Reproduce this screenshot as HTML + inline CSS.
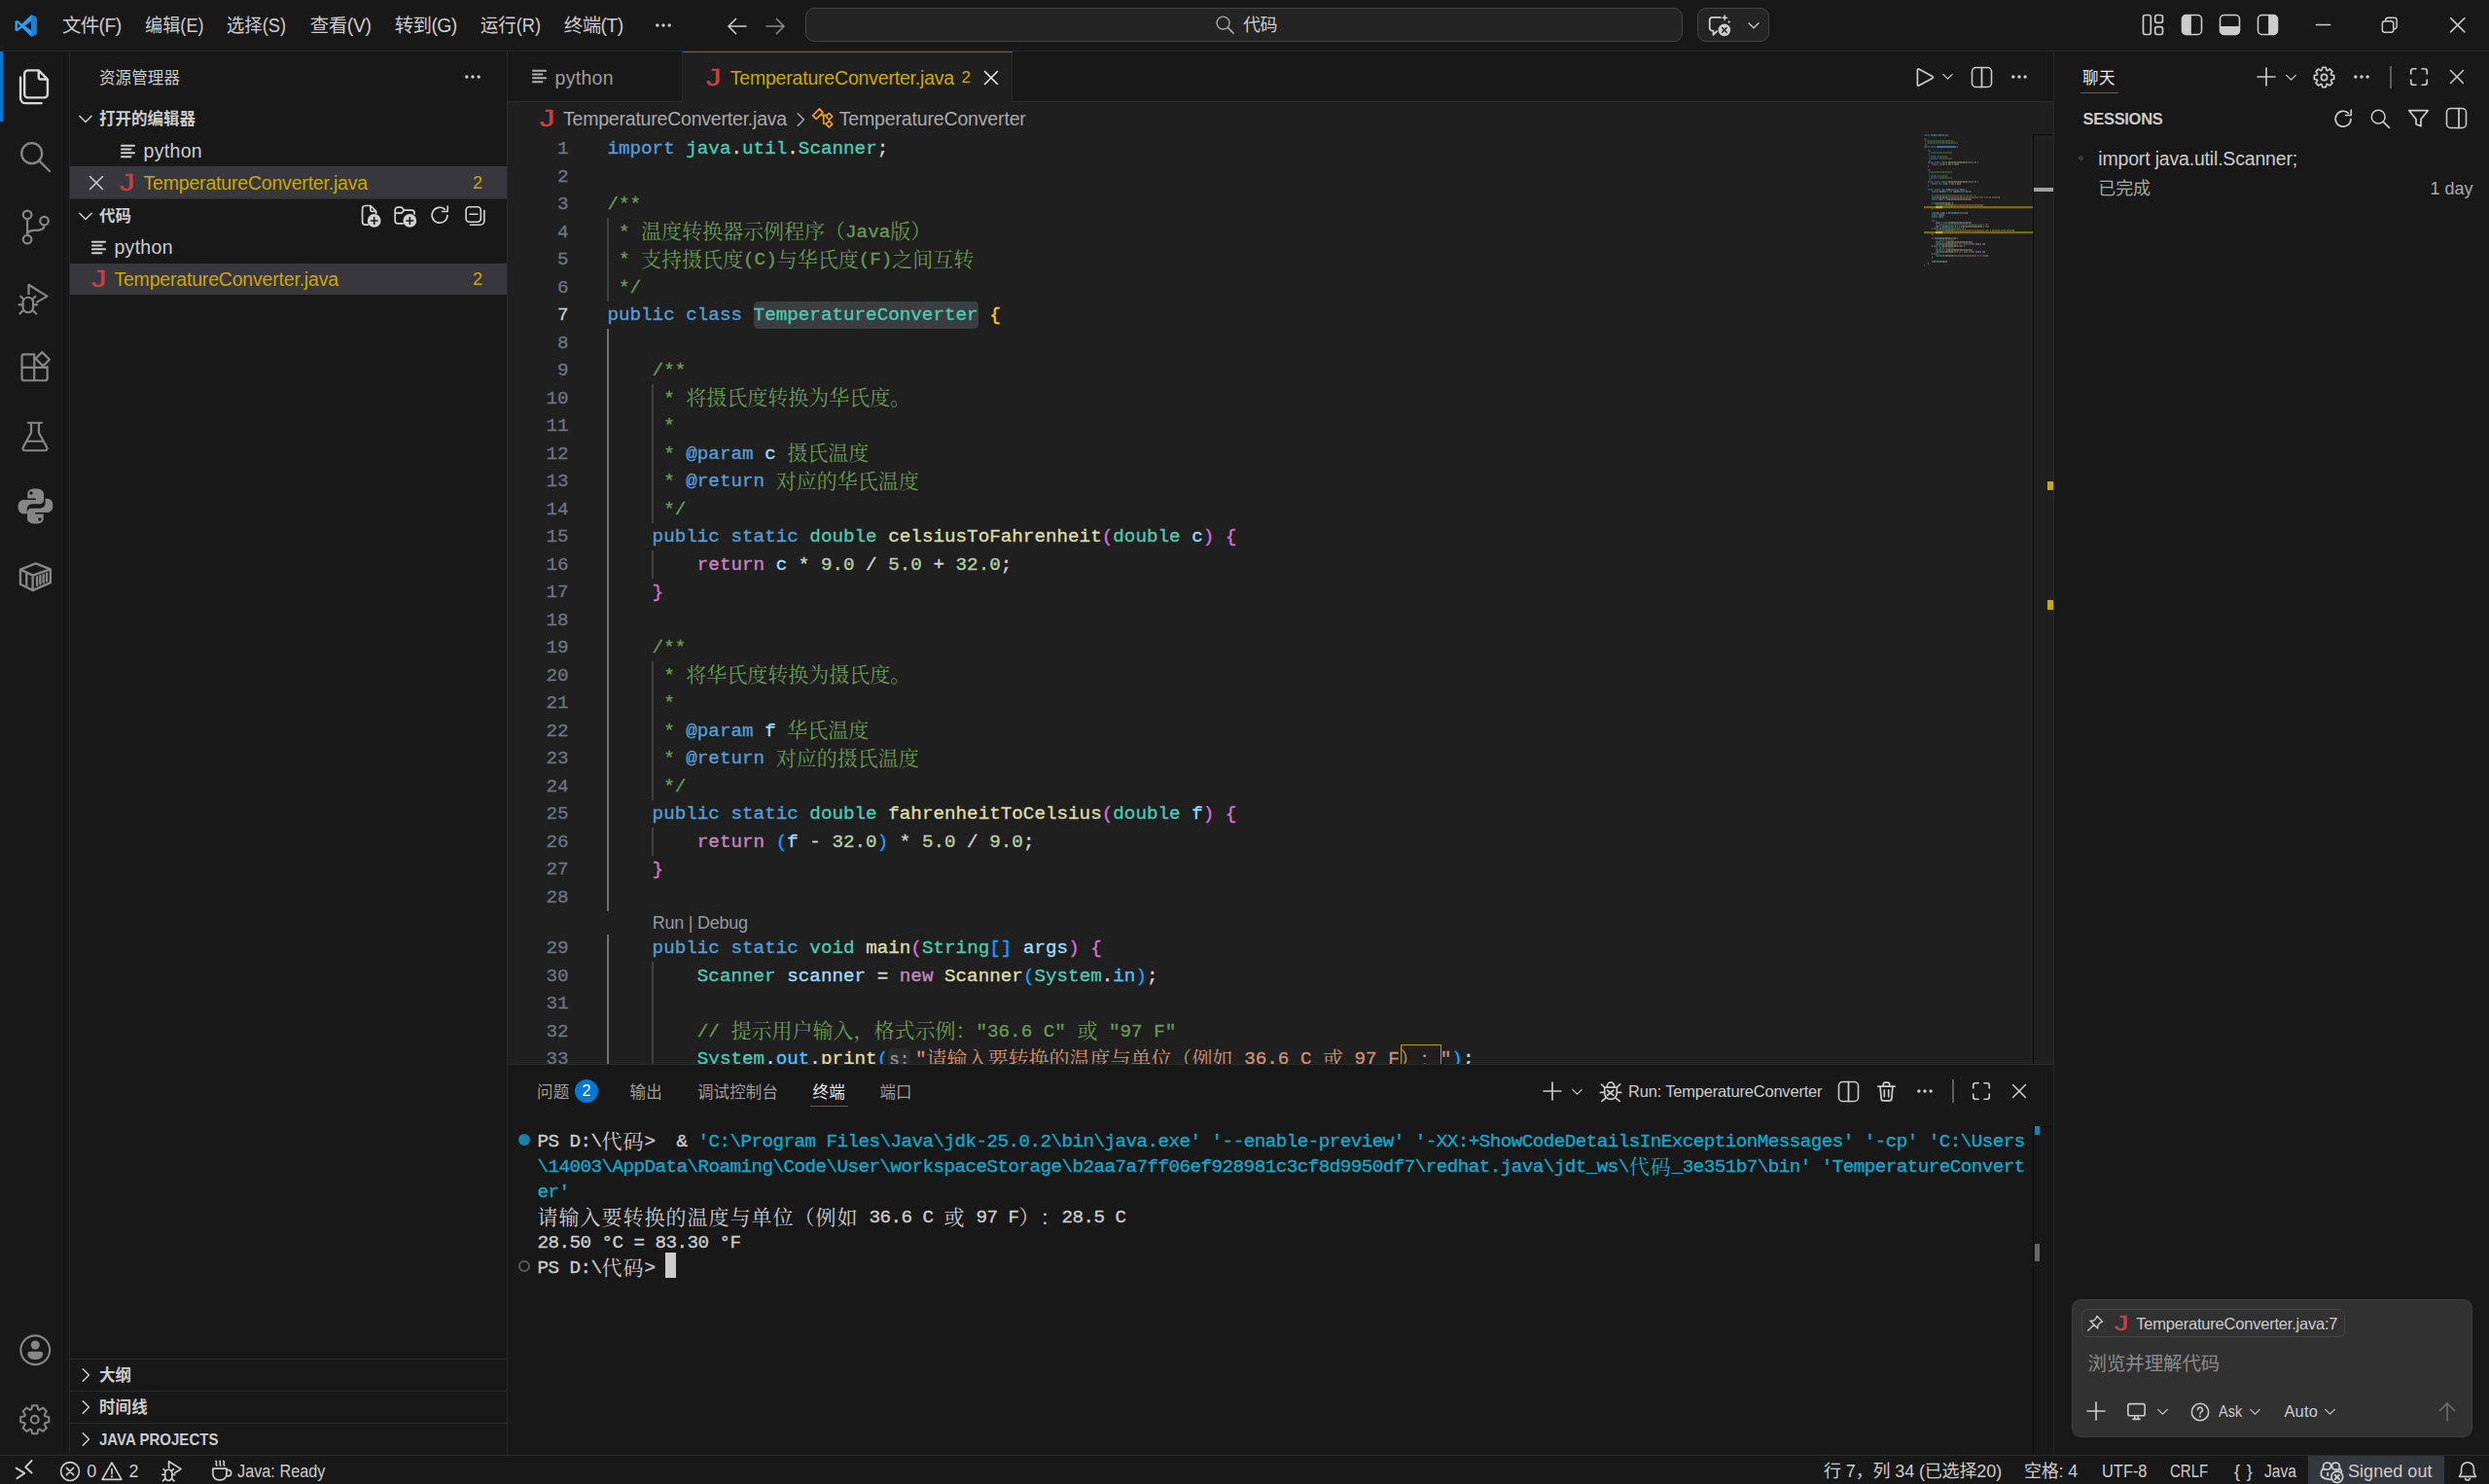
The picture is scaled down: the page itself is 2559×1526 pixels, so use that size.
<!DOCTYPE html>
<html lang="zh-CN"><head><meta charset="utf-8"><title>TemperatureConverter.java - 代码 - Visual Studio Code</title>
<style>
html,body{margin:0;padding:0;background:#181818;overflow:hidden}
body{text-spacing-trim:space-all;width:2559px;height:1526px;position:relative;font-family:"Liberation Sans","Noto Sans CJK SC",sans-serif;color:#cccccc;font-size:19.5px}
.a{position:absolute}
.t{position:absolute;white-space:pre}
.cl{position:absolute;white-space:pre;font-family:"Liberation Mono","Noto Serif CJK SC",monospace;font-size:19.25px;line-height:28.5px;height:28.5px;left:624.4px;color:#d4d4d4;-webkit-text-stroke:0.35px}
.cj{font-family:"Noto Serif CJK SC","Noto Sans CJK SC",serif;font-size:21px;line-height:1px;position:relative;top:1.5px;-webkit-text-stroke:0}
.ln{position:absolute;white-space:pre;font-family:"Liberation Mono","Noto Serif CJK SC",monospace;font-size:19.25px;line-height:28.5px;height:28.5px;width:62.5px;left:522px;text-align:right;color:#6e7681;-webkit-text-stroke:0.3px}
.tl{position:absolute;white-space:pre;font-family:"Liberation Mono","Noto Serif CJK SC",monospace;font-size:19.25px;letter-spacing:-0.55px;line-height:26px;height:26px;left:552.5px;color:#cccccc;-webkit-text-stroke:0.35px}
.tj{font-family:"Noto Serif CJK SC","Noto Sans CJK SC",serif;font-size:21px;letter-spacing:1px;line-height:1px;position:relative;top:2px;-webkit-text-stroke:0}
.k{color:#569cd6}.c{color:#c586c0}.y{color:#4ec9b0}.f{color:#dcdcaa}.v{color:#9cdcfe}.s{color:#ce9178}.n{color:#b5cea8}.g{color:#6a9955}.b1{color:#ffd700}.b2{color:#da70d6}.b3{color:#179fff}.o{color:#4fc1ff}.cy{color:#11a8cd}
</style></head>
<body>
<div class="a" style="left:0px;top:0px;width:2559px;height:1526px;background:#181818;"></div>
<div class="a" style="left:0px;top:52px;width:2559px;height:1px;background:#2b2b2b;"></div>
<div class="a" style="left:71px;top:53px;width:1px;height:1443px;background:#2b2b2b;"></div>
<div class="a" style="left:521px;top:53px;width:1px;height:1443px;background:#2b2b2b;"></div>
<div class="a" style="left:522px;top:53px;width:1589px;height:1042px;background:#1f1f1f;"></div>
<div class="a" style="left:522px;top:53px;width:1589px;height:52px;background:#181818;"></div>
<div class="a" style="left:522px;top:104px;width:1589px;height:1px;background:#2b2b2b;"></div>
<div class="a" style="left:702px;top:53px;width:339px;height:52px;background:#1f1f1f;"></div>
<div class="a" style="left:701px;top:53px;width:1px;height:52px;background:#2b2b2b;"></div>
<div class="a" style="left:1040px;top:53px;width:1px;height:52px;background:#2b2b2b;"></div>
<div class="a" style="left:702px;top:53px;width:339px;height:1px;background:#0078d4;"></div>
<div class="a" style="left:522px;top:1094px;width:1589px;height:1px;background:#2b2b2b;"></div>
<div class="a" style="left:2111px;top:53px;width:1px;height:1443px;background:#2b2b2b;"></div>
<div class="a" style="left:0px;top:1496px;width:2559px;height:1px;background:#2b2b2b;"></div>
<svg class="a" style="left:13.80px;top:13.50px;color:#cccccc" width="25" height="25" viewBox="0 0 24 24"><path d="M17.5 1.2 L8.2 10 L3.6 6.4 L1.4 7.5 V16.5 L3.6 17.6 L8.2 14 L17.5 22.8 L22.6 20.4 V3.6 Z M17.5 7.2 V16.8 L11.2 12 Z M3.8 9.3 L6.7 12 L3.8 14.7 Z" fill="#2a9df4" fill-rule="evenodd"/><path d="M17.5 1.2 L22.6 3.6 V20.4 L17.5 22.8 Z" fill="#1f7fd0"/></svg>
<span id="t1" class="t" style="top:11.00px;font-size:19.5px;color:#cccccc;line-height:30px;height:30px;left:63.90px;letter-spacing:-0.643px;">文件(F)</span>
<span id="t2" class="t" style="top:11.00px;font-size:19.5px;color:#cccccc;line-height:30px;height:30px;left:148.70px;transform:scaleX(0.9323);transform-origin:0 50%;">编辑(E)</span>
<span id="t3" class="t" style="top:11.00px;font-size:19.5px;color:#cccccc;line-height:30px;height:30px;left:233.40px;transform:scaleX(0.9415);transform-origin:0 50%;">选择(S)</span>
<span id="t4" class="t" style="top:11.00px;font-size:19.5px;color:#cccccc;line-height:30px;height:30px;left:318.70px;letter-spacing:-0.419px;">查看(V)</span>
<span id="t5" class="t" style="top:11.00px;font-size:19.5px;color:#cccccc;line-height:30px;height:30px;left:405.70px;letter-spacing:-0.653px;">转到(G)</span>
<span id="t6" class="t" style="top:11.00px;font-size:19.5px;color:#cccccc;line-height:30px;height:30px;left:493.70px;transform:scaleX(0.9394);transform-origin:0 50%;">运行(R)</span>
<span id="t7" class="t" style="top:11.00px;font-size:19.5px;color:#cccccc;line-height:30px;height:30px;left:579.80px;letter-spacing:-0.643px;">终端(T)</span>
<svg class="a" style="left:669.70px;top:14.00px;color:#cccccc" width="24" height="24" viewBox="0 0 16 16"><circle cx="3.9" cy="8" r="1.15" fill="currentColor"/><circle cx="8" cy="8" r="1.15" fill="currentColor"/><circle cx="12.1" cy="8" r="1.15" fill="currentColor"/></svg>
<svg class="a" style="left:745.50px;top:14.50px;color:#cccccc" width="24" height="24" viewBox="0 0 16 16"><path d="M14 8 H2.5 M7 3 L2 8 L7 13" fill="none" stroke="currentColor" stroke-width="1.1" stroke-linecap="round" stroke-linejoin="round" /></svg>
<svg class="a" style="left:784.80px;top:14.50px;color:#8a8a8a" width="24" height="24" viewBox="0 0 16 16"><path d="M2 8 H13.5 M9 3 L14 8 L9 13" fill="none" stroke="currentColor" stroke-width="1.1" stroke-linecap="round" stroke-linejoin="round" /></svg>
<div class="a" style="left:828px;top:8px;width:900px;height:33px;background:#242424;border:1px solid #444444;border-radius:9px"></div>
<svg class="a" style="left:1247.75px;top:13.55px;color:#a8a8a8" width="22.5" height="22.5" viewBox="0 0 16 16"><circle cx="6.8" cy="6.8" r="4.6" fill="none" stroke="currentColor" stroke-width="1"/><path d="M10.2 10.2 L14.3 14.3" fill="none" stroke="currentColor" stroke-width="1.1" stroke-linecap="round" stroke-linejoin="round" /></svg>
<span id="t8" class="t" style="top:10.50px;font-size:18px;color:#cccccc;line-height:30px;height:30px;left:1278.00px;letter-spacing:-0.500px;">代码</span>
<div class="a" style="left:1745px;top:8px;width:72px;height:33px;background:#242424;border:1px solid #444444;border-radius:9px"></div>
<svg class="a" style="left:1755.00px;top:12.50px;color:#cccccc" width="26" height="26" viewBox="0 0 16 16"><path d="M8.5 3 H3.5 A1.8 1.8 0 0 0 1.7 4.8 V9.7 A1.8 1.8 0 0 0 3.5 11.5 H4 V14 L6.3 11.7" fill="none" stroke="currentColor" stroke-width="1.1" stroke-linecap="round" stroke-linejoin="round" /><path d="M11.2 .8 L11.8 2.6 L13.6 3.2 L11.8 3.8 L11.2 5.6 L10.6 3.8 L8.8 3.2 L10.6 2.6 Z M14 4.6 L14.3 5.5 L15.2 5.8 L14.3 6.1 L14 7 L13.7 6.1 L12.8 5.8 L13.7 5.5 Z" fill="currentColor" /><circle cx="11" cy="11" r="3.9" fill="currentColor"/><path d="M9.6 9.6 L12.4 12.4 M12.4 9.6 L9.6 12.4" stroke="#181818" stroke-width=".85" stroke-linecap="round"/></svg>
<svg class="a" style="left:1793.50px;top:16.50px;color:#cccccc" width="18" height="18" viewBox="0 0 16 16"><path d="M3.5 6 L8 10.5 L12.5 6" fill="none" stroke="currentColor" stroke-width="1.1" stroke-linecap="round" stroke-linejoin="round" /></svg>
<svg class="a" style="left:2201.20px;top:13.20px;color:#cccccc" width="25" height="25" viewBox="0 0 16 16"><rect x="1.6" y="1.6" width="5" height="12.8" rx="1.4" fill="none" stroke="currentColor" stroke-width="1.1"/><rect x="9.4" y="1.6" width="5" height="5" rx="1.4" fill="none" stroke="currentColor" stroke-width="1.1"/><rect x="9.4" y="9.4" width="5" height="5" rx="1.4" fill="none" stroke="currentColor" stroke-width="1.1"/></svg>
<svg class="a" style="left:2240.50px;top:13.20px;color:#cccccc" width="25" height="25" viewBox="0 0 16 16"><rect x="1.6" y="1.6" width="12.8" height="12.8" rx="2.6" fill="none" stroke="currentColor"/><path d="M4.2 1.6 H7.6 V14.4 H4.2 A2.6 2.6 0 0 1 1.6 11.8 V4.2 A2.6 2.6 0 0 1 4.2 1.6 Z" fill="currentColor" /></svg>
<svg class="a" style="left:2279.50px;top:13.20px;color:#cccccc" width="25" height="25" viewBox="0 0 16 16"><rect x="1.6" y="1.6" width="12.8" height="12.8" rx="2.6" fill="none" stroke="currentColor"/><path d="M1.6 9 H14.4 V11.8 A2.6 2.6 0 0 1 11.8 14.4 H4.2 A2.6 2.6 0 0 1 1.6 11.8 Z" fill="currentColor" /></svg>
<svg class="a" style="left:2318.50px;top:13.20px;color:#cccccc" width="25" height="25" viewBox="0 0 16 16"><rect x="1.6" y="1.6" width="12.8" height="12.8" rx="2.6" fill="none" stroke="currentColor"/><path d="M11.8 1.6 H8.4 V14.4 H11.8 A2.6 2.6 0 0 0 14.4 11.8 V4.2 A2.6 2.6 0 0 0 11.8 1.6 Z" fill="currentColor" /></svg>
<svg class="a" style="left:2377.80px;top:15.00px;color:#cccccc" width="21" height="21" viewBox="0 0 16 16"><path d="M2.5 8 H13.5" fill="none" stroke="currentColor" stroke-width="1" stroke-linecap="round" stroke-linejoin="round" /></svg>
<svg class="a" style="left:2445.75px;top:14.75px;color:#cccccc" width="21.5" height="21.5" viewBox="0 0 16 16"><rect x="2.5" y="5" width="8.5" height="8.5" rx="1.8" fill="none" stroke="currentColor" stroke-width="1.1"/><path d="M5 5 V4.3 A1.8 1.8 0 0 1 6.8 2.5 H11.7 A1.8 1.8 0 0 1 13.5 4.3 V9.2 A1.8 1.8 0 0 1 11.7 11 H11" fill="none" stroke="currentColor" stroke-width="1.1" stroke-linecap="round" stroke-linejoin="round" /></svg>
<svg class="a" style="left:2515.55px;top:14.75px;color:#cccccc" width="21.5" height="21.5" viewBox="0 0 16 16"><path d="M2.7 2.7 L13.3 13.3 M13.3 2.7 L2.7 13.3" fill="none" stroke="currentColor" stroke-width="1.1" stroke-linecap="round" stroke-linejoin="round" /></svg>
<div class="a" style="left:0px;top:53px;width:3px;height:72px;background:#0078d4;"></div>
<svg class="a" style="left:16.00px;top:70.00px;color:#d7d7d7" width="38" height="38" viewBox="0 0 24 24"><path d="M8 1.5 H15 L20.8 7.3 V17 A2.2 2.2 0 0 1 18.6 19.2 H8 A2.2 2.2 0 0 1 5.8 17 V3.7 A2.2 2.2 0 0 1 8 1.5 Z M15 1.7 V5.8 A1.5 1.5 0 0 0 16.5 7.3 H20.6 M3.2 6 V19.5 A3.3 3.3 0 0 0 6.5 22.8 H16.8" fill="none" stroke="currentColor" stroke-width="1.5" stroke-linecap="round" stroke-linejoin="round" /></svg>
<svg class="a" style="left:16.00px;top:141.00px;color:#868686" width="40" height="40" viewBox="0 0 24 24"><circle cx="10" cy="10" r="6.3" fill="none" stroke="currentColor" stroke-width="1.4"/><path d="M14.6 14.6 L21 21" fill="none" stroke="currentColor" stroke-width="1.4" stroke-linecap="round" stroke-linejoin="round" /></svg>
<svg class="a" style="left:17.00px;top:214.00px;color:#868686" width="38" height="38" viewBox="0 0 24 24"><circle cx="7" cy="4.3" r="2.7" fill="none" stroke="currentColor" stroke-width="1.4"/><circle cx="7" cy="20.3" r="2.7" fill="none" stroke="currentColor" stroke-width="1.4"/><circle cx="18" cy="8.3" r="2.7" fill="none" stroke="currentColor" stroke-width="1.4"/><path d="M7 7 V17.6 M18 11 C18 14.5 14.5 14.3 11 14.5 C8.5 14.7 7 15.5 7 17.6" fill="none" stroke="currentColor" stroke-width="1.4" stroke-linecap="round" stroke-linejoin="round" /></svg>
<svg class="a" style="left:16.00px;top:288.00px;color:#868686" width="38" height="38" viewBox="0 0 24 24"><path d="M8.5 9 V3 L20.5 10.5 L14 14.3" fill="none" stroke="currentColor" stroke-width="1.4" stroke-linecap="round" stroke-linejoin="round" /><path d="M4.8 14.5 A3.3 3.3 0 0 1 11.4 14.5 V17.7 A3.3 3.3 0 0 1 4.8 17.7 Z M4.8 16 H2.2 M11.4 16 H14 M5.2 19.5 L2.8 21.8 M11 19.5 L13.4 21.8 M5.4 12.6 L3.3 10.6 M10.8 12.6 L12.9 10.6" fill="none" stroke="currentColor" stroke-width="1.4" stroke-linecap="round" stroke-linejoin="round" /></svg>
<svg class="a" style="left:17.00px;top:358.00px;color:#868686" width="38" height="38" viewBox="0 0 24 24"><path d="M3.5 5.5 A1.5 1.5 0 0 1 5 4 H11.5 V21 H5 A1.5 1.5 0 0 1 3.5 19.5 Z M3.5 12.5 H20 V19.5 A1.5 1.5 0 0 1 18.500 21 H11.5 M11.5 12 V12 M20 12 V12.2 M16.6 2.6 L21.4 7.4 L17.2 11.6 L12.4 6.8 Z" fill="none" stroke="currentColor" stroke-width="1.4" stroke-linecap="round" stroke-linejoin="round" /></svg>
<svg class="a" style="left:17.00px;top:430.00px;color:#868686" width="38" height="38" viewBox="0 0 24 24"><path d="M7.5 3 H16.500 M9.5 3 V9.5 L4.3 19 A1.3 1.3 0 0 0 5.4 21 H18.6 A1.3 1.3 0 0 0 19.7 19 L14.5 9.5 V3 M6.5 15 H17.5" fill="none" stroke="currentColor" stroke-width="1.4" stroke-linecap="round" stroke-linejoin="round" /></svg>
<svg class="a" style="left:15.50px;top:499.50px;color:#868686" width="41" height="41" viewBox="0 0 24 24"><path d="M11.9 1.5 C8.8 1.5 7.2 2.6 7.2 4.6 V7.3 H12.2 V8.2 H5 C3 8.2 1.5 9.6 1.5 12.3 C1.5 15 2.9 16.6 4.8 16.6 H6.9 V13.9 C6.9 12 8.4 10.700 10.300 10.700 H14.5 C16 10.700 17 9.6 17 8.2 V4.6 C17 2.700 15.200 1.500 11.900 1.500 Z M9.400 3.100 A1 1 0 1 1 9.400 5.100 A1 1 0 0 1 9.400 3.100 Z" fill="currentColor" /><path d="M12.1 22.5 C15.2 22.5 16.8 21.4 16.8 19.4 V16.7 H11.8 V15.8 H19 C21 15.8 22.5 14.4 22.5 11.7 C22.5 9 21.1 7.4 19.2 7.4 H17.9 V10.1 C17.9 12 16.4 13.3 14.5 13.3 H9.5 C8 13.3 7 14.4 7 15.8 V19.4 C7 21.3 8.8 22.5 12.1 22.5 Z M14.6 20.9 A1 1 0 1 1 14.6 18.9 A1 1 0 0 1 14.6 20.9 Z" fill="currentColor" /></svg>
<svg class="a" style="left:17.00px;top:573.00px;color:#868686" width="38" height="38" viewBox="0 0 24 24"><path d="M2.5 8 L12.5 4 L22 7.8 V16.5 L10.5 21.5 L2.5 17.5 Z M2.5 8 L10.5 11.8 L22 7.8 M10.5 11.8 V21.5 M6.5 10 V19.4 M13.3 12.8 V18.2 M15.4 12 V17.3 M17.5 11.3 V16.4 M19.6 10.6 V15.5" fill="none" stroke="currentColor" stroke-width="1.5" stroke-linecap="round" stroke-linejoin="round" /></svg>
<svg class="a" style="left:17.75px;top:1369.75px;color:#868686" width="36.5" height="36.5" viewBox="0 0 24 24"><circle cx="12" cy="12" r="9.8" fill="none" stroke="currentColor" stroke-width="1.4"/><circle cx="12" cy="8.6" r="3" fill="currentColor"/><path d="M6.8 14.6 A1.6 1.6 0 0 1 8.4 13 H15.6 A1.6 1.6 0 0 1 17.2 14.6 C17.2 17 15 18.5 12 18.5 C9 18.5 6.8 17 6.8 14.6 Z" fill="currentColor" /></svg>
<svg class="a" style="left:18.25px;top:1442.25px;color:#868686" width="35.5" height="35.5" viewBox="0 0 24 24"><path d="M9.59 5.00 L10.26 2.15 L13.74 2.15 L14.41 5.00 L15.24 5.35 L17.74 3.81 L20.19 6.26 L18.65 8.76 L19.00 9.59 L21.85 10.26 L21.85 13.74 L19.00 14.41 L18.65 15.24 L20.19 17.74 L17.74 20.19 L15.24 18.65 L14.41 19.00 L13.74 21.85 L10.26 21.85 L9.59 19.00 L8.76 18.65 L6.26 20.19 L3.81 17.74 L5.35 15.24 L5.00 14.41 L2.15 13.74 L2.15 10.26 L5.00 9.59 L5.35 8.76 L3.81 6.26 L6.26 3.81 L8.76 5.35 Z" fill="none" stroke="currentColor" stroke-width="1.4" stroke-linecap="round" stroke-linejoin="round" /><circle cx="12" cy="12" r="2.7" fill="none" stroke="currentColor" stroke-width="1.4"/></svg>
<span id="t9" class="t" style="top:65.00px;font-size:16.5px;color:#cccccc;line-height:30px;height:30px;left:102.00px;letter-spacing:0.100px;">资源管理器</span>
<svg class="a" style="left:474.00px;top:67.00px;color:#cccccc" width="24" height="24" viewBox="0 0 16 16"><circle cx="3.9" cy="8" r="1.15" fill="currentColor"/><circle cx="8" cy="8" r="1.15" fill="currentColor"/><circle cx="12.1" cy="8" r="1.15" fill="currentColor"/></svg>
<svg class="a" style="left:76.50px;top:111.00px;color:#cccccc" width="22" height="22" viewBox="0 0 16 16"><path d="M3.5 6 L8 10.5 L12.5 6" fill="none" stroke="currentColor" stroke-width="1.1" stroke-linecap="round" stroke-linejoin="round" /></svg>
<span id="t10" class="t" style="top:107.00px;font-size:16.5px;color:#cccccc;line-height:30px;height:30px;left:102.00px;font-weight:bold;letter-spacing:0.000px;">打开的编辑器</span>
<svg class="a" style="left:121.00px;top:145.00px;color:#d0d0d0" width="21" height="21" viewBox="0 0 16 16"><path d="M3 3.6 H13 M3 6.5 H10.3 M3 9.4 H13 M3 12.3 H10.3" fill="none" stroke="currentColor" stroke-width="1.5" stroke-linecap="round" stroke-linejoin="round" stroke-linecap="butt"/></svg>
<span id="t11" class="t" style="top:140.00px;font-size:19.5px;color:#cccccc;line-height:30px;height:30px;left:147.50px;letter-spacing:0.323px;">python</span>
<div class="a" style="left:72px;top:171px;width:449px;height:33.5px;background:#37373d;"></div>
<svg class="a" style="left:88.00px;top:177.00px;color:#d0d0d0" width="22" height="22" viewBox="0 0 16 16"><path d="M3.3 3.3 L12.7 12.7 M12.7 3.3 L3.3 12.7" fill="none" stroke="currentColor" stroke-width="1.1" stroke-linecap="round" stroke-linejoin="round" /></svg>
<span id="t12" class="t" style="top:172.50px;font-size:23px;color:#cc3e44;line-height:30px;height:30px;left:123.00px;-webkit-text-stroke:0.5px #cc3e44;transform:scaleX(1.32);transform-origin:0 50%;">J</span>
<span id="t13" class="t" style="top:172.50px;font-size:19.5px;color:#cca700;line-height:30px;height:30px;left:147.50px;letter-spacing:-0.188px;">TemperatureConverter.java</span>
<span id="t14" class="t" style="top:172.50px;font-size:18px;color:#cca700;line-height:30px;height:30px;right:2063.00px;">2</span>
<div class="a" style="left:72px;top:204px;width:449px;height:1px;background:#2b2b2b;"></div>
<svg class="a" style="left:76.50px;top:211.00px;color:#cccccc" width="22" height="22" viewBox="0 0 16 16"><path d="M3.5 6 L8 10.5 L12.5 6" fill="none" stroke="currentColor" stroke-width="1.1" stroke-linecap="round" stroke-linejoin="round" /></svg>
<span id="t15" class="t" style="top:207.00px;font-size:16.5px;color:#cccccc;line-height:30px;height:30px;left:102.00px;font-weight:bold;letter-spacing:0.000px;">代码</span>
<svg class="a" style="left:369.00px;top:208.50px;color:#d2d2d2" width="25" height="25" viewBox="0 0 16 16"><path d="M6 14.1 H4.3 A2 2 0 0 1 2.3 12.1 V3.6 A2 2 0 0 1 4.3 1.6 H7.6 L11.3 5.3 V6.5 M7.6 1.8 V4.3 A1 1 0 0 0 8.6 5.3 H11.1" fill="none" stroke="currentColor" stroke-width="1.1" stroke-linecap="round" stroke-linejoin="round" /><circle cx="10.05" cy="11.5" r="4.4" fill="currentColor"/><path d="M10.05 9.0 V14.0 M7.550000000000001 11.5 H12.55" stroke="#181818" stroke-width="1" fill="none"/></svg>
<svg class="a" style="left:403.50px;top:208.50px;color:#d2d2d2" width="25" height="25" viewBox="0 0 16 16"><path d="M6.5 13.3 H3.2 A1.8 1.8 0 0 1 1.4 11.5 V4.5 A1.8 1.8 0 0 1 3.2 2.700 H5.6 L7.5 4.6 H12.3 A1.8 1.8 0 0 1 14.1 6.4 V7 M1.4 6.500 H5.600 L7.500 4.600" fill="none" stroke="currentColor" stroke-width="1.1" stroke-linecap="round" stroke-linejoin="round" /><circle cx="11.1" cy="11.5" r="4.4" fill="currentColor"/><path d="M11.1 9.0 V14.0 M8.6 11.5 H13.6" stroke="#181818" stroke-width="1" fill="none"/></svg>
<svg class="a" style="left:439.50px;top:209.00px;color:#d2d2d2" width="24" height="24" viewBox="0 0 16 16"><path d="M13.35 8.3 A5.3 5.3 0 1 1 11.6 4.2" fill="none" stroke="currentColor" stroke-width="1.1" stroke-linecap="round" stroke-linejoin="round" /><path d="M13.5 2 V5.65 H9.8" fill="none" stroke="currentColor" stroke-width="1.1" stroke-linecap="round" stroke-linejoin="round" /></svg>
<svg class="a" style="left:476.00px;top:209.00px;color:#d2d2d2" width="24" height="24" viewBox="0 0 16 16"><rect x="2.1" y="2.5" width="10.1" height="10.3" rx="2.2" fill="none" stroke="currentColor" stroke-width="1.1"/><path d="M4.7 7.5 H9.9 M14.6 5 V12 A2.8 2.8 0 0 1 11.8 14.8 H5" fill="none" stroke="currentColor" stroke-width="1.1" stroke-linecap="round" stroke-linejoin="round" /></svg>
<svg class="a" style="left:90.50px;top:243.50px;color:#d0d0d0" width="21" height="21" viewBox="0 0 16 16"><path d="M3 3.6 H13 M3 6.5 H10.3 M3 9.4 H13 M3 12.3 H10.3" fill="none" stroke="currentColor" stroke-width="1.5" stroke-linecap="round" stroke-linejoin="round" stroke-linecap="butt"/></svg>
<span id="t16" class="t" style="top:238.50px;font-size:19.5px;color:#cccccc;line-height:30px;height:30px;left:117.40px;letter-spacing:0.323px;">python</span>
<div class="a" style="left:72px;top:270.5px;width:449px;height:32.5px;background:#37373d;"></div>
<span id="t17" class="t" style="top:271.50px;font-size:23px;color:#cc3e44;line-height:30px;height:30px;left:93.50px;-webkit-text-stroke:0.5px #cc3e44;transform:scaleX(1.32);transform-origin:0 50%;">J</span>
<span id="t18" class="t" style="top:271.50px;font-size:19.5px;color:#cca700;line-height:30px;height:30px;left:117.40px;letter-spacing:-0.188px;">TemperatureConverter.java</span>
<span id="t19" class="t" style="top:271.50px;font-size:18px;color:#cca700;line-height:30px;height:30px;right:2063.00px;">2</span>
<div class="a" style="left:72px;top:1397px;width:449px;height:1px;background:#2b2b2b;"></div>
<svg class="a" style="left:77.00px;top:1403.00px;color:#cccccc" width="22" height="22" viewBox="0 0 16 16"><path d="M6 3.5 L10.5 8 L6 12.5" fill="none" stroke="currentColor" stroke-width="1.1" stroke-linecap="round" stroke-linejoin="round" /></svg>
<span id="t20" class="t" style="top:1399.00px;font-size:16.5px;color:#cccccc;line-height:30px;height:30px;left:102.00px;font-weight:bold;letter-spacing:0.000px;">大纲</span>
<div class="a" style="left:72px;top:1430px;width:449px;height:1px;background:#2b2b2b;"></div>
<svg class="a" style="left:77.00px;top:1436.00px;color:#cccccc" width="22" height="22" viewBox="0 0 16 16"><path d="M6 3.5 L10.5 8 L6 12.5" fill="none" stroke="currentColor" stroke-width="1.1" stroke-linecap="round" stroke-linejoin="round" /></svg>
<span id="t21" class="t" style="top:1432.00px;font-size:16.5px;color:#cccccc;line-height:30px;height:30px;left:102.00px;font-weight:bold;letter-spacing:0.065px;">时间线</span>
<div class="a" style="left:72px;top:1463px;width:449px;height:1px;background:#2b2b2b;"></div>
<svg class="a" style="left:77.00px;top:1469.00px;color:#cccccc" width="22" height="22" viewBox="0 0 16 16"><path d="M6 3.5 L10.5 8 L6 12.5" fill="none" stroke="currentColor" stroke-width="1.1" stroke-linecap="round" stroke-linejoin="round" /></svg>
<span id="t22" class="t" style="top:1465.00px;font-size:16.5px;color:#cccccc;line-height:30px;height:30px;left:102.00px;font-weight:bold;transform:scaleX(0.9105);transform-origin:0 50%;">JAVA PROJECTS</span>
<svg class="a" style="left:544.00px;top:68.00px;color:#b0b0b0" width="21" height="21" viewBox="0 0 16 16"><path d="M3 3.6 H13 M3 6.5 H10.3 M3 9.4 H13 M3 12.3 H10.3" fill="none" stroke="currentColor" stroke-width="1.5" stroke-linecap="round" stroke-linejoin="round" stroke-linecap="butt"/></svg>
<span id="t23" class="t" style="top:64.50px;font-size:19.5px;color:#9d9d9d;line-height:30px;height:30px;left:570.50px;letter-spacing:0.292px;">python</span>
<span id="t24" class="t" style="top:64.50px;font-size:23px;color:#cc3e44;line-height:30px;height:30px;left:726.00px;-webkit-text-stroke:0.5px #cc3e44;transform:scaleX(1.32);transform-origin:0 50%;">J</span>
<span id="t25" class="t" style="top:64.50px;font-size:19.5px;color:#cca700;line-height:30px;height:30px;left:750.70px;letter-spacing:-0.196px;">TemperatureConverter.java</span>
<span id="t26" class="t" style="top:64.50px;font-size:17px;color:#cca700;line-height:30px;height:30px;left:988.60px;">2</span>
<svg class="a" style="left:1008.00px;top:68.50px;color:#ffffff" width="22" height="22" viewBox="0 0 16 16"><path d="M3.3 3.3 L12.7 12.7 M12.7 3.3 L3.3 12.7" fill="none" stroke="currentColor" stroke-width="1.1" stroke-linecap="round" stroke-linejoin="round" /></svg>
<svg class="a" style="left:1967.00px;top:66.50px;color:#cccccc" width="25" height="25" viewBox="0 0 16 16"><path d="M3.7 2.5 L12.6 7.4 A.7 .7 0 0 1 12.6 8.6 L3.7 13.5 A.6 .6 0 0 1 2.8 13 V3 A.6 .6 0 0 1 3.7 2.5 Z" fill="none" stroke="currentColor" stroke-width="1.1" stroke-linecap="round" stroke-linejoin="round" /></svg>
<svg class="a" style="left:1994.00px;top:69.50px;color:#cccccc" width="17" height="17" viewBox="0 0 16 16"><path d="M3.5 6 L8 10.5 L12.5 6" fill="none" stroke="currentColor" stroke-width="1.1" stroke-linecap="round" stroke-linejoin="round" /></svg>
<svg class="a" style="left:2024.50px;top:66.50px;color:#cccccc" width="25" height="25" viewBox="0 0 16 16"><rect x="1.6" y="1.6" width="12.8" height="12.8" rx="2.6" fill="none" stroke="currentColor"/><path d="M8 1.6 V14.4" fill="none" stroke="currentColor" stroke-width="1.1" stroke-linecap="round" stroke-linejoin="round" /></svg>
<svg class="a" style="left:2064.30px;top:67.00px;color:#cccccc" width="24" height="24" viewBox="0 0 16 16"><circle cx="3.9" cy="8" r="1.15" fill="currentColor"/><circle cx="8" cy="8" r="1.15" fill="currentColor"/><circle cx="12.1" cy="8" r="1.15" fill="currentColor"/></svg>
<span id="t27" class="t" style="top:107.00px;font-size:23px;color:#cc3e44;line-height:30px;height:30px;left:555.00px;-webkit-text-stroke:0.5px #cc3e44;transform:scaleX(1.32);transform-origin:0 50%;">J</span>
<span id="t28" class="t" style="top:107.00px;font-size:19.5px;color:#a9a9a9;line-height:30px;height:30px;left:579.00px;letter-spacing:-0.208px;">TemperatureConverter.java</span>
<svg class="a" style="left:811.50px;top:111.50px;color:#a9a9a9" width="22" height="22" viewBox="0 0 16 16"><path d="M6 3.5 L10.5 8 L6 12.5" fill="none" stroke="currentColor" stroke-width="1.1" stroke-linecap="round" stroke-linejoin="round" /></svg>
<svg class="a" style="left:834.00px;top:110.00px;color:#ee9d28" width="24" height="24" viewBox="0 0 16 16"><path d="M1.1 5.9 L5.7 1.3 L8 3.7 L3.5 8.3 Z M6.8 5.6 H10.3 M8.5 5.6 V11.5 H10.3 M12.3 4.3 L14.5 6.5 L12.3 8.7 L10.1 6.5 Z M12.3 9.5 L14.5 11.7 L12.3 13.9 L10.1 11.7 Z" fill="none" stroke="currentColor" stroke-width="1.15" stroke-linecap="round" stroke-linejoin="round" /></svg>
<span id="t29" class="t" style="top:107.00px;font-size:19.5px;color:#a9a9a9;line-height:30px;height:30px;left:862.70px;letter-spacing:-0.155px;">TemperatureConverter</span>
<div class="a" style="left:522px;top:105px;width:1568px;height:989px;overflow:hidden"><div class="a" style="left:-522px;top:-105px;width:2559px;height:1526px">
<div class="a" style="left:774.5px;top:310.0px;width:231px;height:28px;background:#3a3d41;border-radius:4.5px"></div>
<div class="a" style="left:624px;top:224.0px;width:1.5px;height:85.5px;background:#404040;"></div>
<div class="a" style="left:624px;top:338.0px;width:1.5px;height:598.5px;background:#707070;"></div>
<div class="a" style="left:624px;top:960.5px;width:1.5px;height:133.5px;background:#707070;"></div>
<div class="a" style="left:670px;top:395.0px;width:1.5px;height:142.5px;background:#404040;"></div>
<div class="a" style="left:670px;top:566.0px;width:1.5px;height:28.5px;background:#404040;"></div>
<div class="a" style="left:670px;top:680.0px;width:1.5px;height:142.5px;background:#404040;"></div>
<div class="a" style="left:670px;top:851.0px;width:1.5px;height:28.5px;background:#404040;"></div>
<div class="a" style="left:670px;top:989.0px;width:1.5px;height:105.0px;background:#404040;"></div>
<div class="ln" style="top:139.4px;color:#6e7681">1</div>
<div class="cl" style="top:139.4px"><span class="k">import</span> <span class="y">java</span>.<span class="y">util</span>.<span class="y">Scanner</span>;</div>
<div class="ln" style="top:167.9px;color:#6e7681">2</div>
<div class="ln" style="top:196.4px;color:#6e7681">3</div>
<div class="cl" style="top:196.4px"><span class="g">/**</span></div>
<div class="ln" style="top:224.9px;color:#6e7681">4</div>
<div class="cl" style="top:224.9px"><span class="g"> * <span class="cj">温度转换器示例程序（</span>Java<span class="cj">版）</span></span></div>
<div class="ln" style="top:253.4px;color:#6e7681">5</div>
<div class="cl" style="top:253.4px"><span class="g"> * <span class="cj">支持摄氏度</span>(C)<span class="cj">与华氏度</span>(F)<span class="cj">之间互转</span></span></div>
<div class="ln" style="top:281.9px;color:#6e7681">6</div>
<div class="cl" style="top:281.9px"><span class="g"> */</span></div>
<div class="ln" style="top:310.4px;color:#cccccc">7</div>
<div class="cl" style="top:310.4px"><span class="k">public</span> <span class="k">class</span> <span class="y">TemperatureConverter</span> <span class="b1">{</span></div>
<div class="ln" style="top:338.9px;color:#6e7681">8</div>
<div class="ln" style="top:367.4px;color:#6e7681">9</div>
<div class="cl" style="top:367.4px">    <span class="g">/**</span></div>
<div class="ln" style="top:395.9px;color:#6e7681">10</div>
<div class="cl" style="top:395.9px">    <span class="g"> * <span class="cj">将摄氏度转换为华氏度。</span></span></div>
<div class="ln" style="top:424.4px;color:#6e7681">11</div>
<div class="cl" style="top:424.4px">    <span class="g"> *</span></div>
<div class="ln" style="top:452.9px;color:#6e7681">12</div>
<div class="cl" style="top:452.9px">    <span class="g"> * </span><span class="k">@param</span> <span class="v">c</span><span class="g"> <span class="cj">摄氏温度</span></span></div>
<div class="ln" style="top:481.4px;color:#6e7681">13</div>
<div class="cl" style="top:481.4px">    <span class="g"> * </span><span class="k">@return</span><span class="g"> <span class="cj">对应的华氏温度</span></span></div>
<div class="ln" style="top:509.9px;color:#6e7681">14</div>
<div class="cl" style="top:509.9px">    <span class="g"> */</span></div>
<div class="ln" style="top:538.4px;color:#6e7681">15</div>
<div class="cl" style="top:538.4px">    <span class="k">public</span> <span class="k">static</span> <span class="y">double</span> <span class="f">celsiusToFahrenheit</span><span class="b2">(</span><span class="y">double</span> <span class="v">c</span><span class="b2">)</span> <span class="b2">{</span></div>
<div class="ln" style="top:566.9px;color:#6e7681">16</div>
<div class="cl" style="top:566.9px">        <span class="c">return</span> <span class="v">c</span> * <span class="n">9.0</span> / <span class="n">5.0</span> + <span class="n">32.0</span>;</div>
<div class="ln" style="top:595.4px;color:#6e7681">17</div>
<div class="cl" style="top:595.4px">    <span class="b2">}</span></div>
<div class="ln" style="top:623.9px;color:#6e7681">18</div>
<div class="ln" style="top:652.4px;color:#6e7681">19</div>
<div class="cl" style="top:652.4px">    <span class="g">/**</span></div>
<div class="ln" style="top:680.9px;color:#6e7681">20</div>
<div class="cl" style="top:680.9px">    <span class="g"> * <span class="cj">将华氏度转换为摄氏度。</span></span></div>
<div class="ln" style="top:709.4px;color:#6e7681">21</div>
<div class="cl" style="top:709.4px">    <span class="g"> *</span></div>
<div class="ln" style="top:737.9px;color:#6e7681">22</div>
<div class="cl" style="top:737.9px">    <span class="g"> * </span><span class="k">@param</span> <span class="v">f</span><span class="g"> <span class="cj">华氏温度</span></span></div>
<div class="ln" style="top:766.4px;color:#6e7681">23</div>
<div class="cl" style="top:766.4px">    <span class="g"> * </span><span class="k">@return</span><span class="g"> <span class="cj">对应的摄氏温度</span></span></div>
<div class="ln" style="top:794.9px;color:#6e7681">24</div>
<div class="cl" style="top:794.9px">    <span class="g"> */</span></div>
<div class="ln" style="top:823.4px;color:#6e7681">25</div>
<div class="cl" style="top:823.4px">    <span class="k">public</span> <span class="k">static</span> <span class="y">double</span> <span class="f">fahrenheitToCelsius</span><span class="b2">(</span><span class="y">double</span> <span class="v">f</span><span class="b2">)</span> <span class="b2">{</span></div>
<div class="ln" style="top:851.9px;color:#6e7681">26</div>
<div class="cl" style="top:851.9px">        <span class="c">return</span> <span class="b3">(</span><span class="v">f</span> - <span class="n">32.0</span><span class="b3">)</span> * <span class="n">5.0</span> / <span class="n">9.0</span>;</div>
<div class="ln" style="top:880.4px;color:#6e7681">27</div>
<div class="cl" style="top:880.4px">    <span class="b2">}</span></div>
<div class="ln" style="top:908.9px;color:#6e7681">28</div>
<div class="ln" style="top:961.4px;color:#6e7681">29</div>
<div class="cl" style="top:961.4px">    <span class="k">public</span> <span class="k">static</span> <span class="y">void</span> <span class="f">main</span><span class="b2">(</span><span class="y">String</span><span class="b3">[]</span> <span class="v">args</span><span class="b2">)</span> <span class="b2">{</span></div>
<div class="ln" style="top:989.9px;color:#6e7681">30</div>
<div class="cl" style="top:989.9px">        <span class="y">Scanner</span> <span class="v">scanner</span> = <span class="c">new</span> <span class="f">Scanner</span><span class="b3">(</span><span class="y">System</span>.<span class="o">in</span><span class="b3">)</span>;</div>
<div class="ln" style="top:1018.4px;color:#6e7681">31</div>
<div class="ln" style="top:1046.9px;color:#6e7681">32</div>
<div class="cl" style="top:1046.9px">        <span class="g">// <span class="cj">提示用户输入，格式示例：</span>"36.6 C" <span class="cj">或</span> "97 F"</span></div>
<div class="ln" style="top:1075.4px;color:#6e7681">33</div>
<div class="cl" style="top:1075.4px">        <span class="y">System</span>.<span class="o">out</span>.<span class="f">print</span><span class="b3">(</span><span style="display:inline-block;width:27.8px;height:24px;vertical-align:top;margin-top:2.5px;position:relative"><span style="position:absolute;left:0;top:0;width:23px;height:24px;background:#2a2a2a;border-radius:4px;font-size:17.5px;line-height:24px;color:#969696;text-align:center">s:</span></span><span class="s">"<span class="cj">请输入要转换的温度与单位（例如</span> 36.6 C <span class="cj">或</span> 97 F</span><span class="s"><span class="cj">）：</span></span><span class="s">"</span><span class="b3">)</span>;</div>
<div class="a" style="left:1439.5px;top:1074px;width:40px;height:26px;border:1.5px solid #bd9b03"></div>
<span id="t30" class="t" style="top:934.20px;font-size:18px;color:#999999;line-height:30px;height:30px;left:670.80px;letter-spacing:-0.250px;">Run | Debug</span>
</div></div>
<svg class="a" style="left:1978px;top:137.6px" width="112" height="140" viewBox="0 0 112 140"><rect x="0" y="0.3" width="6" height="1.4" fill="#569cd6" opacity=".5"/><rect x="7" y="0.3" width="4" height="1.4" fill="#4ec9b0" opacity=".5"/><rect x="11" y="0.3" width="1" height="1.4" fill="#d4d4d4" opacity=".5"/><rect x="12" y="0.3" width="4" height="1.4" fill="#4ec9b0" opacity=".5"/><rect x="16" y="0.3" width="1" height="1.4" fill="#d4d4d4" opacity=".5"/><rect x="17" y="0.3" width="7" height="1.4" fill="#4ec9b0" opacity=".5"/><rect x="24" y="0.3" width="1" height="1.4" fill="#d4d4d4" opacity=".5"/><rect x="0" y="4.3" width="3" height="1.4" fill="#6a9955" opacity=".5"/><rect x="1" y="6.3" width="1" height="1.4" fill="#6a9955" opacity=".5"/><rect x="3" y="6.3" width="28" height="1.4" fill="#6a9955" opacity=".5"/><rect x="1" y="8.3" width="1" height="1.4" fill="#6a9955" opacity=".5"/><rect x="3" y="8.3" width="32" height="1.4" fill="#6a9955" opacity=".5"/><rect x="1" y="10.3" width="2" height="1.4" fill="#6a9955" opacity=".5"/><rect x="0" y="12.3" width="6" height="1.4" fill="#569cd6" opacity=".5"/><rect x="7" y="12.3" width="5" height="1.4" fill="#569cd6" opacity=".5"/><rect x="13" y="12.3" width="20" height="1.4" fill="#4ec9b0" opacity=".5"/><rect x="34" y="12.3" width="1" height="1.4" fill="#ffd700" opacity=".5"/><rect x="4" y="16.3" width="3" height="1.4" fill="#6a9955" opacity=".5"/><rect x="5" y="18.3" width="1" height="1.4" fill="#6a9955" opacity=".5"/><rect x="7" y="18.3" width="22" height="1.4" fill="#6a9955" opacity=".5"/><rect x="5" y="20.3" width="1" height="1.4" fill="#6a9955" opacity=".5"/><rect x="5" y="22.3" width="1" height="1.4" fill="#6a9955" opacity=".5"/><rect x="7" y="22.3" width="6" height="1.4" fill="#569cd6" opacity=".5"/><rect x="14" y="22.3" width="1" height="1.4" fill="#9cdcfe" opacity=".5"/><rect x="16" y="22.3" width="8" height="1.4" fill="#6a9955" opacity=".5"/><rect x="5" y="24.3" width="1" height="1.4" fill="#6a9955" opacity=".5"/><rect x="7" y="24.3" width="7" height="1.4" fill="#569cd6" opacity=".5"/><rect x="15" y="24.3" width="14" height="1.4" fill="#6a9955" opacity=".5"/><rect x="5" y="26.3" width="2" height="1.4" fill="#6a9955" opacity=".5"/><rect x="4" y="28.3" width="6" height="1.4" fill="#569cd6" opacity=".5"/><rect x="11" y="28.3" width="6" height="1.4" fill="#569cd6" opacity=".5"/><rect x="18" y="28.3" width="6" height="1.4" fill="#4ec9b0" opacity=".5"/><rect x="25" y="28.3" width="19" height="1.4" fill="#dcdcaa" opacity=".5"/><rect x="44" y="28.3" width="1" height="1.4" fill="#da70d6" opacity=".5"/><rect x="45" y="28.3" width="6" height="1.4" fill="#4ec9b0" opacity=".5"/><rect x="52" y="28.3" width="1" height="1.4" fill="#9cdcfe" opacity=".5"/><rect x="53" y="28.3" width="1" height="1.4" fill="#da70d6" opacity=".5"/><rect x="55" y="28.3" width="1" height="1.4" fill="#da70d6" opacity=".5"/><rect x="8" y="30.3" width="6" height="1.4" fill="#c586c0" opacity=".5"/><rect x="15" y="30.3" width="1" height="1.4" fill="#9cdcfe" opacity=".5"/><rect x="17" y="30.3" width="1" height="1.4" fill="#d4d4d4" opacity=".5"/><rect x="19" y="30.3" width="3" height="1.4" fill="#b5cea8" opacity=".5"/><rect x="23" y="30.3" width="1" height="1.4" fill="#d4d4d4" opacity=".5"/><rect x="25" y="30.3" width="3" height="1.4" fill="#b5cea8" opacity=".5"/><rect x="29" y="30.3" width="1" height="1.4" fill="#d4d4d4" opacity=".5"/><rect x="31" y="30.3" width="4" height="1.4" fill="#b5cea8" opacity=".5"/><rect x="35" y="30.3" width="1" height="1.4" fill="#d4d4d4" opacity=".5"/><rect x="4" y="32.3" width="1" height="1.4" fill="#da70d6" opacity=".5"/><rect x="4" y="36.3" width="3" height="1.4" fill="#6a9955" opacity=".5"/><rect x="5" y="38.3" width="1" height="1.4" fill="#6a9955" opacity=".5"/><rect x="7" y="38.3" width="22" height="1.4" fill="#6a9955" opacity=".5"/><rect x="5" y="40.3" width="1" height="1.4" fill="#6a9955" opacity=".5"/><rect x="5" y="42.3" width="1" height="1.4" fill="#6a9955" opacity=".5"/><rect x="7" y="42.3" width="6" height="1.4" fill="#569cd6" opacity=".5"/><rect x="14" y="42.3" width="1" height="1.4" fill="#9cdcfe" opacity=".5"/><rect x="16" y="42.3" width="8" height="1.4" fill="#6a9955" opacity=".5"/><rect x="5" y="44.3" width="1" height="1.4" fill="#6a9955" opacity=".5"/><rect x="7" y="44.3" width="7" height="1.4" fill="#569cd6" opacity=".5"/><rect x="15" y="44.3" width="14" height="1.4" fill="#6a9955" opacity=".5"/><rect x="5" y="46.3" width="2" height="1.4" fill="#6a9955" opacity=".5"/><rect x="4" y="48.3" width="6" height="1.4" fill="#569cd6" opacity=".5"/><rect x="11" y="48.3" width="6" height="1.4" fill="#569cd6" opacity=".5"/><rect x="18" y="48.3" width="6" height="1.4" fill="#4ec9b0" opacity=".5"/><rect x="25" y="48.3" width="19" height="1.4" fill="#dcdcaa" opacity=".5"/><rect x="44" y="48.3" width="1" height="1.4" fill="#da70d6" opacity=".5"/><rect x="45" y="48.3" width="6" height="1.4" fill="#4ec9b0" opacity=".5"/><rect x="52" y="48.3" width="1" height="1.4" fill="#9cdcfe" opacity=".5"/><rect x="53" y="48.3" width="1" height="1.4" fill="#da70d6" opacity=".5"/><rect x="55" y="48.3" width="1" height="1.4" fill="#da70d6" opacity=".5"/><rect x="8" y="50.3" width="6" height="1.4" fill="#c586c0" opacity=".5"/><rect x="15" y="50.3" width="1" height="1.4" fill="#179fff" opacity=".5"/><rect x="16" y="50.3" width="1" height="1.4" fill="#9cdcfe" opacity=".5"/><rect x="18" y="50.3" width="1" height="1.4" fill="#d4d4d4" opacity=".5"/><rect x="20" y="50.3" width="4" height="1.4" fill="#b5cea8" opacity=".5"/><rect x="24" y="50.3" width="1" height="1.4" fill="#179fff" opacity=".5"/><rect x="26" y="50.3" width="1" height="1.4" fill="#d4d4d4" opacity=".5"/><rect x="28" y="50.3" width="3" height="1.4" fill="#b5cea8" opacity=".5"/><rect x="32" y="50.3" width="1" height="1.4" fill="#d4d4d4" opacity=".5"/><rect x="34" y="50.3" width="3" height="1.4" fill="#b5cea8" opacity=".5"/><rect x="37" y="50.3" width="1" height="1.4" fill="#d4d4d4" opacity=".5"/><rect x="4" y="52.3" width="1" height="1.4" fill="#da70d6" opacity=".5"/><rect x="4" y="56.3" width="6" height="1.4" fill="#569cd6" opacity=".5"/><rect x="11" y="56.3" width="6" height="1.4" fill="#569cd6" opacity=".5"/><rect x="18" y="56.3" width="4" height="1.4" fill="#4ec9b0" opacity=".5"/><rect x="23" y="56.3" width="4" height="1.4" fill="#dcdcaa" opacity=".5"/><rect x="27" y="56.3" width="1" height="1.4" fill="#da70d6" opacity=".5"/><rect x="28" y="56.3" width="6" height="1.4" fill="#4ec9b0" opacity=".5"/><rect x="34" y="56.3" width="2" height="1.4" fill="#179fff" opacity=".5"/><rect x="37" y="56.3" width="4" height="1.4" fill="#9cdcfe" opacity=".5"/><rect x="41" y="56.3" width="1" height="1.4" fill="#da70d6" opacity=".5"/><rect x="43" y="56.3" width="1" height="1.4" fill="#da70d6" opacity=".5"/><rect x="8" y="58.3" width="7" height="1.4" fill="#4ec9b0" opacity=".5"/><rect x="16" y="58.3" width="7" height="1.4" fill="#9cdcfe" opacity=".5"/><rect x="24" y="58.3" width="1" height="1.4" fill="#d4d4d4" opacity=".5"/><rect x="26" y="58.3" width="3" height="1.4" fill="#c586c0" opacity=".5"/><rect x="30" y="58.3" width="7" height="1.4" fill="#dcdcaa" opacity=".5"/><rect x="37" y="58.3" width="1" height="1.4" fill="#179fff" opacity=".5"/><rect x="38" y="58.3" width="6" height="1.4" fill="#4ec9b0" opacity=".5"/><rect x="44" y="58.3" width="1" height="1.4" fill="#d4d4d4" opacity=".5"/><rect x="45" y="58.3" width="2" height="1.4" fill="#4fc1ff" opacity=".5"/><rect x="47" y="58.3" width="1" height="1.4" fill="#179fff" opacity=".5"/><rect x="48" y="58.3" width="1" height="1.4" fill="#d4d4d4" opacity=".5"/><rect x="8" y="62.3" width="2" height="1.4" fill="#6a9955" opacity=".5"/><rect x="11" y="62.3" width="29" height="1.4" fill="#6a9955" opacity=".5"/><rect x="41" y="62.3" width="2" height="1.4" fill="#6a9955" opacity=".5"/><rect x="44" y="62.3" width="2" height="1.4" fill="#6a9955" opacity=".5"/><rect x="47" y="62.3" width="3" height="1.4" fill="#6a9955" opacity=".5"/><rect x="51" y="62.3" width="2" height="1.4" fill="#6a9955" opacity=".5"/><rect x="8" y="64.3" width="6" height="1.4" fill="#4ec9b0" opacity=".5"/><rect x="14" y="64.3" width="1" height="1.4" fill="#d4d4d4" opacity=".5"/><rect x="15" y="64.3" width="3" height="1.4" fill="#4fc1ff" opacity=".5"/><rect x="18" y="64.3" width="1" height="1.4" fill="#d4d4d4" opacity=".5"/><rect x="19" y="64.3" width="5" height="1.4" fill="#dcdcaa" opacity=".5"/><rect x="24" y="64.3" width="1" height="1.4" fill="#179fff" opacity=".5"/><rect x="25" y="64.3" width="31" height="1.4" fill="#ce9178" opacity=".5"/><rect x="57" y="64.3" width="4" height="1.4" fill="#ce9178" opacity=".5"/><rect x="62" y="64.3" width="1" height="1.4" fill="#ce9178" opacity=".5"/><rect x="64" y="64.3" width="2" height="1.4" fill="#ce9178" opacity=".5"/><rect x="67" y="64.3" width="2" height="1.4" fill="#ce9178" opacity=".5"/><rect x="70" y="64.3" width="1" height="1.4" fill="#ce9178" opacity=".5"/><rect x="71" y="64.3" width="4" height="1.4" fill="#ce9178" opacity=".5"/><rect x="75" y="64.3" width="1" height="1.4" fill="#ce9178" opacity=".5"/><rect x="76" y="64.3" width="1" height="1.4" fill="#179fff" opacity=".5"/><rect x="77" y="64.3" width="1" height="1.4" fill="#d4d4d4" opacity=".5"/><rect x="8" y="66.3" width="6" height="1.4" fill="#4ec9b0" opacity=".5"/><rect x="15" y="66.3" width="5" height="1.4" fill="#9cdcfe" opacity=".5"/><rect x="21" y="66.3" width="1" height="1.4" fill="#d4d4d4" opacity=".5"/><rect x="23" y="66.3" width="7" height="1.4" fill="#9cdcfe" opacity=".5"/><rect x="30" y="66.3" width="1" height="1.4" fill="#d4d4d4" opacity=".5"/><rect x="31" y="66.3" width="8" height="1.4" fill="#dcdcaa" opacity=".5"/><rect x="39" y="66.3" width="3" height="1.4" fill="#d4d4d4" opacity=".5"/><rect x="42" y="66.3" width="4" height="1.4" fill="#dcdcaa" opacity=".5"/><rect x="46" y="66.3" width="3" height="1.4" fill="#d4d4d4" opacity=".5"/><rect x="8" y="70.3" width="2" height="1.4" fill="#c586c0" opacity=".5"/><rect x="11" y="70.3" width="1" height="1.4" fill="#d4d4d4" opacity=".5"/><rect x="12" y="70.3" width="5" height="1.4" fill="#9cdcfe" opacity=".5"/><rect x="17" y="70.3" width="1" height="1.4" fill="#d4d4d4" opacity=".5"/><rect x="18" y="70.3" width="7" height="1.4" fill="#dcdcaa" opacity=".5"/><rect x="25" y="70.3" width="3" height="1.4" fill="#d4d4d4" opacity=".5"/><rect x="29" y="70.3" width="1" height="1.4" fill="#d4d4d4" opacity=".5"/><rect x="12" y="72.3" width="6" height="1.4" fill="#4ec9b0" opacity=".5"/><rect x="18" y="72.3" width="1" height="1.4" fill="#d4d4d4" opacity=".5"/><rect x="19" y="72.3" width="3" height="1.4" fill="#4fc1ff" opacity=".5"/><rect x="22" y="72.3" width="1" height="1.4" fill="#d4d4d4" opacity=".5"/><rect x="23" y="72.3" width="7" height="1.4" fill="#dcdcaa" opacity=".5"/><rect x="30" y="72.3" width="1" height="1.4" fill="#d4d4d4" opacity=".5"/><rect x="31" y="72.3" width="28" height="1.4" fill="#ce9178" opacity=".5"/><rect x="59" y="72.3" width="2" height="1.4" fill="#d4d4d4" opacity=".5"/><rect x="12" y="74.3" width="6" height="1.4" fill="#c586c0" opacity=".5"/><rect x="18" y="74.3" width="1" height="1.4" fill="#d4d4d4" opacity=".5"/><rect x="8" y="76.3" width="1" height="1.4" fill="#d4d4d4" opacity=".5"/><rect x="8" y="80.3" width="6" height="1.4" fill="#4ec9b0" opacity=".5"/><rect x="14" y="80.3" width="2" height="1.4" fill="#d4d4d4" opacity=".5"/><rect x="17" y="80.3" width="5" height="1.4" fill="#9cdcfe" opacity=".5"/><rect x="23" y="80.3" width="1" height="1.4" fill="#d4d4d4" opacity=".5"/><rect x="25" y="80.3" width="5" height="1.4" fill="#9cdcfe" opacity=".5"/><rect x="30" y="80.3" width="1" height="1.4" fill="#d4d4d4" opacity=".5"/><rect x="31" y="80.3" width="5" height="1.4" fill="#dcdcaa" opacity=".5"/><rect x="36" y="80.3" width="1" height="1.4" fill="#d4d4d4" opacity=".5"/><rect x="37" y="80.3" width="6" height="1.4" fill="#ce9178" opacity=".5"/><rect x="43" y="80.3" width="2" height="1.4" fill="#d4d4d4" opacity=".5"/><rect x="8" y="82.3" width="6" height="1.4" fill="#4ec9b0" opacity=".5"/><rect x="15" y="82.3" width="5" height="1.4" fill="#9cdcfe" opacity=".5"/><rect x="20" y="82.3" width="1" height="1.4" fill="#d4d4d4" opacity=".5"/><rect x="8" y="84.3" width="6" height="1.4" fill="#4ec9b0" opacity=".5"/><rect x="15" y="84.3" width="4" height="1.4" fill="#9cdcfe" opacity=".5"/><rect x="19" y="84.3" width="1" height="1.4" fill="#d4d4d4" opacity=".5"/><rect x="8" y="88.3" width="3" height="1.4" fill="#c586c0" opacity=".5"/><rect x="12" y="88.3" width="1" height="1.4" fill="#d4d4d4" opacity=".5"/><rect x="12" y="90.3" width="5" height="1.4" fill="#9cdcfe" opacity=".5"/><rect x="18" y="90.3" width="1" height="1.4" fill="#d4d4d4" opacity=".5"/><rect x="20" y="90.3" width="6" height="1.4" fill="#4ec9b0" opacity=".5"/><rect x="26" y="90.3" width="1" height="1.4" fill="#d4d4d4" opacity=".5"/><rect x="27" y="90.3" width="11" height="1.4" fill="#dcdcaa" opacity=".5"/><rect x="38" y="90.3" width="1" height="1.4" fill="#d4d4d4" opacity=".5"/><rect x="39" y="90.3" width="5" height="1.4" fill="#9cdcfe" opacity=".5"/><rect x="44" y="90.3" width="1" height="1.4" fill="#d4d4d4" opacity=".5"/><rect x="45" y="90.3" width="1" height="1.4" fill="#b5cea8" opacity=".5"/><rect x="46" y="90.3" width="3" height="1.4" fill="#d4d4d4" opacity=".5"/><rect x="12" y="92.3" width="2" height="1.4" fill="#6a9955" opacity=".5"/><rect x="15" y="92.3" width="40" height="1.4" fill="#6a9955" opacity=".5"/><rect x="56" y="92.3" width="4" height="1.4" fill="#6a9955" opacity=".5"/><rect x="61" y="92.3" width="1" height="1.4" fill="#6a9955" opacity=".5"/><rect x="63" y="92.3" width="3" height="1.4" fill="#6a9955" opacity=".5"/><rect x="12" y="94.3" width="4" height="1.4" fill="#9cdcfe" opacity=".5"/><rect x="17" y="94.3" width="1" height="1.4" fill="#d4d4d4" opacity=".5"/><rect x="19" y="94.3" width="5" height="1.4" fill="#9cdcfe" opacity=".5"/><rect x="24" y="94.3" width="1" height="1.4" fill="#d4d4d4" opacity=".5"/><rect x="25" y="94.3" width="6" height="1.4" fill="#4fc1ff" opacity=".5"/><rect x="32" y="94.3" width="1" height="1.4" fill="#d4d4d4" opacity=".5"/><rect x="34" y="94.3" width="1" height="1.4" fill="#b5cea8" opacity=".5"/><rect x="36" y="94.3" width="1" height="1.4" fill="#d4d4d4" opacity=".5"/><rect x="38" y="94.3" width="5" height="1.4" fill="#9cdcfe" opacity=".5"/><rect x="43" y="94.3" width="1" height="1.4" fill="#d4d4d4" opacity=".5"/><rect x="44" y="94.3" width="1" height="1.4" fill="#b5cea8" opacity=".5"/><rect x="45" y="94.3" width="2" height="1.4" fill="#d4d4d4" opacity=".5"/><rect x="47" y="94.3" width="11" height="1.4" fill="#dcdcaa" opacity=".5"/><rect x="58" y="94.3" width="2" height="1.4" fill="#d4d4d4" opacity=".5"/><rect x="61" y="94.3" width="1" height="1.4" fill="#d4d4d4" opacity=".5"/><rect x="63" y="94.3" width="3" height="1.4" fill="#ce9178" opacity=".5"/><rect x="66" y="94.3" width="1" height="1.4" fill="#d4d4d4" opacity=".5"/><rect x="8" y="96.3" width="1" height="1.4" fill="#d4d4d4" opacity=".5"/><rect x="10" y="96.3" width="5" height="1.4" fill="#c586c0" opacity=".5"/><rect x="16" y="96.3" width="1" height="1.4" fill="#d4d4d4" opacity=".5"/><rect x="17" y="96.3" width="21" height="1.4" fill="#4ec9b0" opacity=".5"/><rect x="39" y="96.3" width="1" height="1.4" fill="#9cdcfe" opacity=".5"/><rect x="40" y="96.3" width="1" height="1.4" fill="#d4d4d4" opacity=".5"/><rect x="42" y="96.3" width="1" height="1.4" fill="#d4d4d4" opacity=".5"/><rect x="12" y="98.3" width="6" height="1.4" fill="#4ec9b0" opacity=".5"/><rect x="18" y="98.3" width="1" height="1.4" fill="#d4d4d4" opacity=".5"/><rect x="19" y="98.3" width="3" height="1.4" fill="#4fc1ff" opacity=".5"/><rect x="22" y="98.3" width="1" height="1.4" fill="#d4d4d4" opacity=".5"/><rect x="23" y="98.3" width="7" height="1.4" fill="#dcdcaa" opacity=".5"/><rect x="30" y="98.3" width="1" height="1.4" fill="#d4d4d4" opacity=".5"/><rect x="31" y="98.3" width="31" height="1.4" fill="#ce9178" opacity=".5"/><rect x="63" y="98.3" width="4" height="1.4" fill="#ce9178" opacity=".5"/><rect x="68" y="98.3" width="1" height="1.4" fill="#ce9178" opacity=".5"/><rect x="70" y="98.3" width="8" height="1.4" fill="#ce9178" opacity=".5"/><rect x="79" y="98.3" width="5" height="1.4" fill="#ce9178" opacity=".5"/><rect x="85" y="98.3" width="6" height="1.4" fill="#ce9178" opacity=".5"/><rect x="91" y="98.3" width="2" height="1.4" fill="#d4d4d4" opacity=".5"/><rect x="12" y="100.3" width="6" height="1.4" fill="#c586c0" opacity=".5"/><rect x="18" y="100.3" width="1" height="1.4" fill="#d4d4d4" opacity=".5"/><rect x="8" y="102.3" width="1" height="1.4" fill="#d4d4d4" opacity=".5"/><rect x="8" y="106.3" width="2" height="1.4" fill="#c586c0" opacity=".5"/><rect x="11" y="106.3" width="1" height="1.4" fill="#d4d4d4" opacity=".5"/><rect x="12" y="106.3" width="4" height="1.4" fill="#9cdcfe" opacity=".5"/><rect x="16" y="106.3" width="1" height="1.4" fill="#d4d4d4" opacity=".5"/><rect x="17" y="106.3" width="10" height="1.4" fill="#dcdcaa" opacity=".5"/><rect x="27" y="106.3" width="1" height="1.4" fill="#d4d4d4" opacity=".5"/><rect x="28" y="106.3" width="3" height="1.4" fill="#ce9178" opacity=".5"/><rect x="31" y="106.3" width="2" height="1.4" fill="#d4d4d4" opacity=".5"/><rect x="34" y="106.3" width="1" height="1.4" fill="#d4d4d4" opacity=".5"/><rect x="12" y="108.3" width="2" height="1.4" fill="#6a9955" opacity=".5"/><rect x="15" y="108.3" width="6" height="1.4" fill="#6a9955" opacity=".5"/><rect x="22" y="108.3" width="2" height="1.4" fill="#6a9955" opacity=".5"/><rect x="25" y="108.3" width="6" height="1.4" fill="#6a9955" opacity=".5"/><rect x="12" y="110.3" width="6" height="1.4" fill="#4ec9b0" opacity=".5"/><rect x="19" y="110.3" width="1" height="1.4" fill="#9cdcfe" opacity=".5"/><rect x="21" y="110.3" width="1" height="1.4" fill="#d4d4d4" opacity=".5"/><rect x="23" y="110.3" width="19" height="1.4" fill="#dcdcaa" opacity=".5"/><rect x="42" y="110.3" width="1" height="1.4" fill="#d4d4d4" opacity=".5"/><rect x="43" y="110.3" width="5" height="1.4" fill="#9cdcfe" opacity=".5"/><rect x="48" y="110.3" width="2" height="1.4" fill="#d4d4d4" opacity=".5"/><rect x="12" y="112.3" width="6" height="1.4" fill="#4ec9b0" opacity=".5"/><rect x="18" y="112.3" width="1" height="1.4" fill="#d4d4d4" opacity=".5"/><rect x="19" y="112.3" width="3" height="1.4" fill="#4fc1ff" opacity=".5"/><rect x="22" y="112.3" width="1" height="1.4" fill="#d4d4d4" opacity=".5"/><rect x="23" y="112.3" width="6" height="1.4" fill="#dcdcaa" opacity=".5"/><rect x="29" y="112.3" width="1" height="1.4" fill="#d4d4d4" opacity=".5"/><rect x="30" y="112.3" width="5" height="1.4" fill="#ce9178" opacity=".5"/><rect x="36" y="112.3" width="2" height="1.4" fill="#ce9178" opacity=".5"/><rect x="39" y="112.3" width="1" height="1.4" fill="#ce9178" opacity=".5"/><rect x="41" y="112.3" width="4" height="1.4" fill="#ce9178" opacity=".5"/><rect x="46" y="112.3" width="5" height="1.4" fill="#ce9178" opacity=".5"/><rect x="51" y="112.3" width="1" height="1.4" fill="#d4d4d4" opacity=".5"/><rect x="53" y="112.3" width="5" height="1.4" fill="#9cdcfe" opacity=".5"/><rect x="58" y="112.3" width="1" height="1.4" fill="#d4d4d4" opacity=".5"/><rect x="60" y="112.3" width="1" height="1.4" fill="#9cdcfe" opacity=".5"/><rect x="61" y="112.3" width="2" height="1.4" fill="#d4d4d4" opacity=".5"/><rect x="8" y="114.3" width="1" height="1.4" fill="#d4d4d4" opacity=".5"/><rect x="10" y="114.3" width="4" height="1.4" fill="#c586c0" opacity=".5"/><rect x="15" y="114.3" width="2" height="1.4" fill="#c586c0" opacity=".5"/><rect x="18" y="114.3" width="1" height="1.4" fill="#d4d4d4" opacity=".5"/><rect x="19" y="114.3" width="4" height="1.4" fill="#9cdcfe" opacity=".5"/><rect x="23" y="114.3" width="1" height="1.4" fill="#d4d4d4" opacity=".5"/><rect x="24" y="114.3" width="10" height="1.4" fill="#dcdcaa" opacity=".5"/><rect x="34" y="114.3" width="1" height="1.4" fill="#d4d4d4" opacity=".5"/><rect x="35" y="114.3" width="3" height="1.4" fill="#ce9178" opacity=".5"/><rect x="38" y="114.3" width="2" height="1.4" fill="#d4d4d4" opacity=".5"/><rect x="41" y="114.3" width="1" height="1.4" fill="#d4d4d4" opacity=".5"/><rect x="12" y="116.3" width="2" height="1.4" fill="#6a9955" opacity=".5"/><rect x="15" y="116.3" width="6" height="1.4" fill="#6a9955" opacity=".5"/><rect x="22" y="116.3" width="2" height="1.4" fill="#6a9955" opacity=".5"/><rect x="25" y="116.3" width="6" height="1.4" fill="#6a9955" opacity=".5"/><rect x="12" y="118.3" width="6" height="1.4" fill="#4ec9b0" opacity=".5"/><rect x="19" y="118.3" width="1" height="1.4" fill="#9cdcfe" opacity=".5"/><rect x="21" y="118.3" width="1" height="1.4" fill="#d4d4d4" opacity=".5"/><rect x="23" y="118.3" width="19" height="1.4" fill="#dcdcaa" opacity=".5"/><rect x="42" y="118.3" width="1" height="1.4" fill="#d4d4d4" opacity=".5"/><rect x="43" y="118.3" width="5" height="1.4" fill="#9cdcfe" opacity=".5"/><rect x="48" y="118.3" width="2" height="1.4" fill="#d4d4d4" opacity=".5"/><rect x="12" y="120.3" width="6" height="1.4" fill="#4ec9b0" opacity=".5"/><rect x="18" y="120.3" width="1" height="1.4" fill="#d4d4d4" opacity=".5"/><rect x="19" y="120.3" width="3" height="1.4" fill="#4fc1ff" opacity=".5"/><rect x="22" y="120.3" width="1" height="1.4" fill="#d4d4d4" opacity=".5"/><rect x="23" y="120.3" width="6" height="1.4" fill="#dcdcaa" opacity=".5"/><rect x="29" y="120.3" width="1" height="1.4" fill="#d4d4d4" opacity=".5"/><rect x="30" y="120.3" width="5" height="1.4" fill="#ce9178" opacity=".5"/><rect x="36" y="120.3" width="2" height="1.4" fill="#ce9178" opacity=".5"/><rect x="39" y="120.3" width="1" height="1.4" fill="#ce9178" opacity=".5"/><rect x="41" y="120.3" width="4" height="1.4" fill="#ce9178" opacity=".5"/><rect x="46" y="120.3" width="5" height="1.4" fill="#ce9178" opacity=".5"/><rect x="51" y="120.3" width="1" height="1.4" fill="#d4d4d4" opacity=".5"/><rect x="53" y="120.3" width="5" height="1.4" fill="#9cdcfe" opacity=".5"/><rect x="58" y="120.3" width="1" height="1.4" fill="#d4d4d4" opacity=".5"/><rect x="60" y="120.3" width="1" height="1.4" fill="#9cdcfe" opacity=".5"/><rect x="61" y="120.3" width="2" height="1.4" fill="#d4d4d4" opacity=".5"/><rect x="8" y="122.3" width="1" height="1.4" fill="#d4d4d4" opacity=".5"/><rect x="10" y="122.3" width="4" height="1.4" fill="#c586c0" opacity=".5"/><rect x="15" y="122.3" width="1" height="1.4" fill="#d4d4d4" opacity=".5"/><rect x="12" y="124.3" width="6" height="1.4" fill="#4ec9b0" opacity=".5"/><rect x="18" y="124.3" width="1" height="1.4" fill="#d4d4d4" opacity=".5"/><rect x="19" y="124.3" width="3" height="1.4" fill="#4fc1ff" opacity=".5"/><rect x="22" y="124.3" width="1" height="1.4" fill="#d4d4d4" opacity=".5"/><rect x="23" y="124.3" width="7" height="1.4" fill="#dcdcaa" opacity=".5"/><rect x="30" y="124.3" width="1" height="1.4" fill="#d4d4d4" opacity=".5"/><rect x="31" y="124.3" width="23" height="1.4" fill="#ce9178" opacity=".5"/><rect x="55" y="124.3" width="1" height="1.4" fill="#ce9178" opacity=".5"/><rect x="57" y="124.3" width="2" height="1.4" fill="#ce9178" opacity=".5"/><rect x="60" y="124.3" width="4" height="1.4" fill="#ce9178" opacity=".5"/><rect x="64" y="124.3" width="2" height="1.4" fill="#d4d4d4" opacity=".5"/><rect x="8" y="126.3" width="1" height="1.4" fill="#d4d4d4" opacity=".5"/><rect x="8" y="130.3" width="7" height="1.4" fill="#9cdcfe" opacity=".5"/><rect x="15" y="130.3" width="1" height="1.4" fill="#d4d4d4" opacity=".5"/><rect x="16" y="130.3" width="5" height="1.4" fill="#dcdcaa" opacity=".5"/><rect x="21" y="130.3" width="3" height="1.4" fill="#d4d4d4" opacity=".5"/><rect x="4" y="132.3" width="1" height="1.4" fill="#d4d4d4" opacity=".5"/><rect x="0" y="134.3" width="1" height="1.4" fill="#d4d4d4" opacity=".5"/><defs><pattern id="mp" width="3" height="2" patternUnits="userSpaceOnUse"><rect width="1" height="2" fill="#1f1f1f" opacity=".35"/></pattern></defs><rect x="0" y="0" width="112" height="140" fill="url(#mp)"/><rect x="0" y="74" width="112" height="2.2" fill="#806800"/><rect x="12" y="74" width="7" height="2.2" fill="#cca700"/><rect x="0" y="100" width="112" height="2.2" fill="#806800"/><rect x="12" y="100" width="7" height="2.2" fill="#cca700"/><rect x="13" y="12" width="20" height="2" fill="#2c6cb0"/></svg>
<div class="a" style="left:2090px;top:138px;width:1px;height:956px;background:#0a0c10;"></div>
<div class="a" style="left:2090px;top:138px;width:21px;height:1px;background:#0a0c10;"></div>
<div class="a" style="left:2091px;top:192.5px;width:20px;height:4px;background:#a0a0a0;"></div>
<div class="a" style="left:2105px;top:495px;width:6px;height:9px;background:#cca700;"></div>
<div class="a" style="left:2105px;top:617px;width:6px;height:10px;background:#cca700;"></div>
<span id="t31" class="t" style="top:1108.00px;font-size:16.5px;color:#9d9d9d;line-height:30px;height:30px;left:552.00px;letter-spacing:0.298px;">问题</span>
<div class="a" style="left:591px;top:1110px;width:24px;height:24px;border-radius:12px;background:#0078d4;color:#fff;font-size:16px;line-height:24px;text-align:center">2</div>
<span id="t32" class="t" style="top:1108.00px;font-size:16.5px;color:#9d9d9d;line-height:30px;height:30px;left:647.40px;letter-spacing:0.298px;">输出</span>
<span id="t33" class="t" style="top:1108.00px;font-size:16.5px;color:#9d9d9d;line-height:30px;height:30px;left:717.00px;letter-spacing:0.100px;">调试控制台</span>
<span id="t34" class="t" style="top:1108.00px;font-size:16.5px;color:#e7e7e7;line-height:30px;height:30px;left:835.40px;letter-spacing:0.298px;">终端</span>
<div class="a" style="left:833px;top:1137px;width:39px;height:1px;background:#0078d4;"></div>
<span id="t35" class="t" style="top:1108.00px;font-size:16.5px;color:#9d9d9d;line-height:30px;height:30px;left:904.50px;letter-spacing:0.000px;">端口</span>
<svg class="a" style="left:1584.40px;top:1110.00px;color:#cccccc" width="24" height="24" viewBox="0 0 16 16"><path d="M8 2 V14 M2 8 H14" fill="none" stroke="currentColor" stroke-width="1.1" stroke-linecap="round" stroke-linejoin="round" /></svg>
<svg class="a" style="left:1613.00px;top:1113.50px;color:#cccccc" width="17" height="17" viewBox="0 0 16 16"><path d="M3.5 6 L8 10.5 L12.5 6" fill="none" stroke="currentColor" stroke-width="1.1" stroke-linecap="round" stroke-linejoin="round" /></svg>
<svg class="a" style="left:1643.00px;top:1109.50px;color:#cccccc" width="25" height="25" viewBox="0 0 16 16"><path d="M4.3 5.2 H12.4 V9 A4.05 4.1 0 0 1 4.3 9 Z M5.9 5.2 A2.5 3.3 0 0 1 10.9 5.2 M4.3 8.5 H1.5 M12.4 8.5 H15.2 M4.3 5.2 L2.2 3.2 M12.4 5.2 L14.5 3.2 M5 12.2 L2.5 14.3 M11.7 12.2 L14.2 14.3 M6.2 7.2 L10.1 10.4 M10.1 7.2 L6.2 10.4" fill="none" stroke="currentColor" stroke-width="1.1" stroke-linecap="round" stroke-linejoin="round" /></svg>
<span id="t36" class="t" style="top:1107.00px;font-size:16.5px;color:#cccccc;line-height:30px;height:30px;left:1674.00px;letter-spacing:-0.193px;">Run: TemperatureConverter</span>
<svg class="a" style="left:1888.00px;top:1109.50px;color:#cccccc" width="25" height="25" viewBox="0 0 16 16"><rect x="1.6" y="1.6" width="12.8" height="12.8" rx="2.6" fill="none" stroke="currentColor"/><path d="M8 1.6 V14.4" fill="none" stroke="currentColor" stroke-width="1.1" stroke-linecap="round" stroke-linejoin="round" /></svg>
<svg class="a" style="left:1927.00px;top:1109.50px;color:#cccccc" width="25" height="25" viewBox="0 0 16 16"><path d="M2.5 4.5 H13.5 M6 4.3 V3.2 a1.2 1.2 0 0 1 1.2 -1.2 h1.6 a1.2 1.2 0 0 1 1.2 1.2 V4.3 M3.9 4.7 l.7 8 a1.4 1.4 0 0 0 1.4 1.3 h4 a1.4 1.4 0 0 0 1.4 -1.3 l.7 -8 M6.6 7 V11.3 M9.4 7 V11.3" fill="none" stroke="currentColor" stroke-width="1.1" stroke-linecap="round" stroke-linejoin="round" /></svg>
<svg class="a" style="left:1966.50px;top:1110.00px;color:#cccccc" width="24" height="24" viewBox="0 0 16 16"><circle cx="3.9" cy="8" r="1.15" fill="currentColor"/><circle cx="8" cy="8" r="1.15" fill="currentColor"/><circle cx="12.1" cy="8" r="1.15" fill="currentColor"/></svg>
<div class="a" style="left:2007px;top:1110px;width:2px;height:24px;background:#5e5e5e;"></div>
<svg class="a" style="left:2024.70px;top:1110.00px;color:#cccccc" width="24" height="24" viewBox="0 0 16 16"><path d="M2.5 6 V4 A1.5 1.5 0 0 1 4 2.5 H6 M10 2.5 H12 A1.5 1.5 0 0 1 13.5 4 V6 M13.5 10 V12 A1.5 1.5 0 0 1 12 13.5 H10 M6 13.5 H4 A1.5 1.5 0 0 1 2.5 12 V10" fill="none" stroke="currentColor" stroke-width="1.1" stroke-linecap="round" stroke-linejoin="round" /></svg>
<svg class="a" style="left:2065.00px;top:1111.00px;color:#cccccc" width="22" height="22" viewBox="0 0 16 16"><path d="M3.3 3.3 L12.7 12.7 M12.7 3.3 L3.3 12.7" fill="none" stroke="currentColor" stroke-width="1.1" stroke-linecap="round" stroke-linejoin="round" /></svg>
<div class="tl" style="top:1160.6px">PS D:\<span class="tj">代码</span>&gt;  &amp; <span class="cy">'C:\Program Files\Java\jdk-25.0.2\bin\java.exe' '--enable-preview' '-XX:+ShowCodeDetailsInExceptionMessages' '-cp' 'C:\Users</span></div>
<div class="tl" style="top:1186.6px"><span class="cy">\14003\AppData\Roaming\Code\User\workspaceStorage\b2aa7a7ff06ef928981c3cf8d9950df7\redhat.java\jdt_ws\<span class="tj">代码</span>_3e351b7\bin' 'TemperatureConvert</span></div>
<div class="tl" style="top:1212.6px"><span class="cy">er'</span></div>
<div class="tl" style="top:1238.6px"><span class="tj">请输入要转换的温度与单位（例如</span> 36.6 C <span class="tj">或</span> 97 F<span class="tj">）：</span>28.5 C</div>
<div class="tl" style="top:1264.6px">28.50 °C = 83.30 °F</div>
<div class="tl" style="top:1290.6px">PS D:\<span class="tj">代码</span>&gt; </div>
<div class="a" style="left:683.7px;top:1288px;width:11.8px;height:26px;background:#cccccc;"></div>
<div class="a" style="left:532.5px;top:1165.5px;width:12px;height:12px;border-radius:6px;background:#1b81a8"></div>
<div class="a" style="left:532.5px;top:1295.5px;width:8px;height:8px;border-radius:6px;border:2px solid #5a5a5a"></div>
<div class="a" style="left:2090px;top:1158px;width:1px;height:338px;background:#0a0c10;"></div>
<div class="a" style="left:2090px;top:1158px;width:21px;height:1px;background:#0a0c10;"></div>
<div class="a" style="left:2091.5px;top:1158px;width:5.5px;height:9px;background:#1b81a8;"></div>
<div class="a" style="left:2091.5px;top:1279px;width:5.5px;height:18px;background:#686868;"></div>
<span id="t37" class="t" style="top:65.00px;font-size:16.5px;color:#e7e7e7;line-height:30px;height:30px;left:2141.00px;letter-spacing:0.500px;">聊天</span>
<div class="a" style="left:2139px;top:95px;width:39px;height:1px;background:#0078d4;"></div>
<svg class="a" style="left:2318.20px;top:67.00px;color:#cccccc" width="24" height="24" viewBox="0 0 16 16"><path d="M8 2 V14 M2 8 H14" fill="none" stroke="currentColor" stroke-width="1.1" stroke-linecap="round" stroke-linejoin="round" /></svg>
<svg class="a" style="left:2346.50px;top:70.50px;color:#cccccc" width="17" height="17" viewBox="0 0 16 16"><path d="M3.5 6 L8 10.5 L12.5 6" fill="none" stroke="currentColor" stroke-width="1.1" stroke-linecap="round" stroke-linejoin="round" /></svg>
<svg class="a" style="left:2377.00px;top:66.50px;color:#cccccc" width="25" height="25" viewBox="0 0 16 16"><path d="M6.40 3.37 L6.85 1.50 L9.15 1.50 L9.60 3.37 L10.15 3.60 L11.79 2.59 L13.41 4.21 L12.40 5.85 L12.63 6.40 L14.50 6.85 L14.50 9.15 L12.63 9.60 L12.40 10.15 L13.41 11.79 L11.79 13.41 L10.15 12.40 L9.60 12.63 L9.15 14.50 L6.85 14.50 L6.40 12.63 L5.85 12.40 L4.21 13.41 L2.59 11.79 L3.60 10.15 L3.37 9.60 L1.50 9.15 L1.50 6.85 L3.37 6.40 L3.60 5.85 L2.59 4.21 L4.21 2.59 L5.85 3.60 Z" fill="none" stroke="currentColor" stroke-width="1.1" stroke-linecap="round" stroke-linejoin="round" /><circle cx="8" cy="8" r="2" fill="none" stroke="currentColor" stroke-width="1.1"/></svg>
<svg class="a" style="left:2416.30px;top:67.00px;color:#cccccc" width="24" height="24" viewBox="0 0 16 16"><circle cx="3.9" cy="8" r="1.15" fill="currentColor"/><circle cx="8" cy="8" r="1.15" fill="currentColor"/><circle cx="12.1" cy="8" r="1.15" fill="currentColor"/></svg>
<div class="a" style="left:2457px;top:67.5px;width:2px;height:23.5px;background:#5e5e5e;"></div>
<svg class="a" style="left:2475.00px;top:67.00px;color:#cccccc" width="24" height="24" viewBox="0 0 16 16"><path d="M2.5 6 V4 A1.5 1.5 0 0 1 4 2.5 H6 M10 2.5 H12 A1.5 1.5 0 0 1 13.5 4 V6 M13.5 10 V12 A1.5 1.5 0 0 1 12 13.5 H10 M6 13.5 H4 A1.5 1.5 0 0 1 2.5 12 V10" fill="none" stroke="currentColor" stroke-width="1.1" stroke-linecap="round" stroke-linejoin="round" /></svg>
<svg class="a" style="left:2515.30px;top:68.00px;color:#cccccc" width="22" height="22" viewBox="0 0 16 16"><path d="M3.3 3.3 L12.7 12.7 M12.7 3.3 L3.3 12.7" fill="none" stroke="currentColor" stroke-width="1.1" stroke-linecap="round" stroke-linejoin="round" /></svg>
<span id="t38" class="t" style="top:106.80px;font-size:16.5px;color:#cccccc;line-height:30px;height:30px;left:2141.50px;font-weight:bold;letter-spacing:-0.297px;">SESSIONS</span>
<svg class="a" style="left:2396.50px;top:109.80px;color:#cccccc" width="24" height="24" viewBox="0 0 16 16"><path d="M13.35 8.3 A5.3 5.3 0 1 1 11.6 4.2" fill="none" stroke="currentColor" stroke-width="1.1" stroke-linecap="round" stroke-linejoin="round" /><path d="M13.5 2 V5.65 H9.8" fill="none" stroke="currentColor" stroke-width="1.1" stroke-linecap="round" stroke-linejoin="round" /></svg>
<svg class="a" style="left:2434.70px;top:109.80px;color:#cccccc" width="24" height="24" viewBox="0 0 16 16"><circle cx="6.8" cy="6.8" r="4.6" fill="none" stroke="currentColor" stroke-width="1"/><path d="M10.2 10.2 L14.3 14.3" fill="none" stroke="currentColor" stroke-width="1.1" stroke-linecap="round" stroke-linejoin="round" /></svg>
<svg class="a" style="left:2474.00px;top:109.30px;color:#cccccc" width="25" height="25" viewBox="0 0 16 16"><path d="M1.8 3 H14.2 L9.6 8.6 V13.2 L6.4 12 V8.6 Z" fill="none" stroke="currentColor" stroke-width="1.1" stroke-linecap="round" stroke-linejoin="round" /></svg>
<svg class="a" style="left:2512.90px;top:109.30px;color:#cccccc" width="25" height="25" viewBox="0 0 16 16"><rect x="1.6" y="1.6" width="12.8" height="12.8" rx="2.6" fill="none" stroke="currentColor"/><path d="M9.6 1.6 V14.4" fill="none" stroke="currentColor" stroke-width="1.1" stroke-linecap="round" stroke-linejoin="round" /></svg>
<div class="a" style="left:2136.5px;top:159.5px;width:5px;height:5px;border-radius:3px;background:#3a3a3a"></div>
<span id="t39" class="t" style="top:148.00px;font-size:19.5px;color:#cccccc;line-height:30px;height:30px;left:2157.30px;letter-spacing:-0.180px;">import java.util.Scanner;</span>
<span id="t40" class="t" style="top:178.50px;font-size:18px;color:#a8a8a8;line-height:30px;height:30px;left:2157.30px;letter-spacing:-0.102px;">已完成</span>
<span id="t41" class="t" style="top:178.50px;font-size:18px;color:#a8a8a8;line-height:30px;height:30px;right:16.40px;">1 day</span>
<div class="a" style="left:2130px;top:1336px;width:410px;height:140px;background:#313131;border:1px solid #3c3c3c;border-radius:9px"></div>
<div class="a" style="left:2140px;top:1346px;width:269px;height:27px;border:1px solid #474747;border-radius:6px"></div>
<svg class="a" style="left:2144.00px;top:1351.00px;color:#cccccc" width="20" height="20" viewBox="0 0 16 16"><path d="M9.5 1.8 L14.2 6.5 L12.6 7 L10.4 9.2 L10.2 12 L4 5.8 L6.8 5.6 L9 3.4 Z M7 9 L2.2 13.8" fill="none" stroke="currentColor" stroke-width="1.1" stroke-linecap="round" stroke-linejoin="round" /></svg>
<span id="t42" class="t" style="top:1345.50px;font-size:21.5px;color:#cc3e44;line-height:30px;height:30px;left:2173.80px;-webkit-text-stroke:0.5px #cc3e44;transform:scaleX(1.32);transform-origin:0 50%;">J</span>
<span id="t43" class="t" style="top:1346.00px;font-size:16.5px;color:#cccccc;line-height:30px;height:30px;left:2196.30px;letter-spacing:-0.214px;">TemperatureConverter.java:7</span>
<span id="t44" class="t" style="top:1387.30px;font-size:19.5px;color:#8b8b8b;line-height:30px;height:30px;left:2146.50px;letter-spacing:-0.115px;">浏览并理解代码</span>
<svg class="a" style="left:2143.00px;top:1439.20px;color:#cccccc" width="24" height="24" viewBox="0 0 16 16"><path d="M8 2 V14 M2 8 H14" fill="none" stroke="currentColor" stroke-width="1.1" stroke-linecap="round" stroke-linejoin="round" /></svg>
<svg class="a" style="left:2185.00px;top:1440.00px;color:#cccccc" width="23" height="23" viewBox="0 0 16 16"><rect x="2" y="2.5" width="12" height="8.5" rx="1.3" fill="none" stroke="currentColor" stroke-width="1.1"/><path d="M5.5 13.5 H10.5 M6.8 11 V13.5 M9.2 11 V13.5" fill="none" stroke="currentColor" stroke-width="1.1" stroke-linecap="round" stroke-linejoin="round" /></svg>
<svg class="a" style="left:2215.30px;top:1443.00px;color:#cccccc" width="17" height="17" viewBox="0 0 16 16"><path d="M3.5 6 L8 10.5 L12.5 6" fill="none" stroke="currentColor" stroke-width="1.1" stroke-linecap="round" stroke-linejoin="round" /></svg>
<svg class="a" style="left:2251.30px;top:1440.50px;color:#cccccc" width="22" height="22" viewBox="0 0 16 16"><circle cx="8" cy="8" r="6.3" fill="none" stroke="currentColor" stroke-width="1.1"/><path d="M6.2 6.3 A1.8 1.8 0 1 1 8.8 7.9 C8.2 8.3 8 8.7 8 9.4" fill="none" stroke="currentColor" stroke-width="1.1" stroke-linecap="round" stroke-linejoin="round" /><circle cx="8" cy="11.3" r=".7" fill="currentColor"/></svg>
<span id="t45" class="t" style="top:1436.00px;font-size:16.5px;color:#cccccc;line-height:30px;height:30px;left:2281.00px;transform:scaleX(0.8786);transform-origin:0 50%;">Ask</span>
<svg class="a" style="left:2310.00px;top:1443.00px;color:#cccccc" width="17" height="17" viewBox="0 0 16 16"><path d="M3.5 6 L8 10.5 L12.5 6" fill="none" stroke="currentColor" stroke-width="1.1" stroke-linecap="round" stroke-linejoin="round" /></svg>
<span id="t46" class="t" style="top:1436.00px;font-size:16.5px;color:#cccccc;line-height:30px;height:30px;left:2348.40px;letter-spacing:0.162px;">Auto</span>
<svg class="a" style="left:2387.30px;top:1443.00px;color:#cccccc" width="17" height="17" viewBox="0 0 16 16"><path d="M3.5 6 L8 10.5 L12.5 6" fill="none" stroke="currentColor" stroke-width="1.1" stroke-linecap="round" stroke-linejoin="round" /></svg>
<svg class="a" style="left:2504.30px;top:1439.50px;color:#6b6b6b" width="24" height="24" viewBox="0 0 16 16"><path d="M8 14 V2.5 M3 7 L8 2 L13 7" fill="none" stroke="currentColor" stroke-width="1.1" stroke-linecap="round" stroke-linejoin="round" /></svg>
<svg class="a" style="left:10.50px;top:1499.00px;color:#cccccc" width="27" height="27" viewBox="0 0 16 16"><path d="M3.3 6.3 L8.5 9.4 L3.8 12.6 M12.8 1.8 L9 5.7 L12.8 9.2" fill="none" stroke="currentColor" stroke-width="1.15" stroke-linecap="round" stroke-linejoin="round" /></svg>
<svg class="a" style="left:60.00px;top:1500.50px;color:#cccccc" width="24" height="24" viewBox="0 0 16 16"><circle cx="8" cy="8" r="6.3" fill="none" stroke="currentColor" stroke-width="1.1"/><path d="M5.6 5.6 L10.4 10.4 M10.4 5.6 L5.6 10.4" fill="none" stroke="currentColor" stroke-width="1.1" stroke-linecap="round" stroke-linejoin="round" /></svg>
<span id="t47" class="t" style="top:1497.50px;font-size:18px;color:#cccccc;line-height:30px;height:30px;left:89.20px;">0</span>
<svg class="a" style="left:103.30px;top:1500.50px;color:#cccccc" width="24" height="24" viewBox="0 0 16 16"><path d="M8 2 L14.6 13.6 H1.4 Z M8 6.3 V9.8" fill="none" stroke="currentColor" stroke-width="1.1" stroke-linecap="round" stroke-linejoin="round" /><circle cx="8" cy="11.6" r=".7" fill="currentColor"/></svg>
<span id="t48" class="t" style="top:1497.50px;font-size:18px;color:#cccccc;line-height:30px;height:30px;left:132.60px;">2</span>
<svg class="a" style="left:164.50px;top:1500.00px;color:#cccccc" width="25" height="25" viewBox="0 0 16 16"><path d="M5.5 6 V1.8 L13.5 6.8 L9.5 9.3" fill="none" stroke="currentColor" stroke-width="1.1" stroke-linecap="round" stroke-linejoin="round" /><path d="M3 9.5 A2.3 2.3 0 0 1 7.6 9.5 V12 A2.3 2.3 0 0 1 3 12 Z M3 10.5 H1.2 M7.6 10.5 H9.4 M3.2 13 L1.6 14.6 M7.4 13 L9 14.6 M3.4 8.2 L2 6.8 M7.2 8.2 L8.6 6.8" fill="none" stroke="currentColor" stroke-width="1.1" stroke-linecap="round" stroke-linejoin="round" /></svg>
<svg class="a" style="left:215.00px;top:1500.00px;color:#cccccc" width="25" height="25" viewBox="0 0 16 16"><path d="M2.5 6.5 H11.5 V10 A4 4 0 0 1 7.5 14 H6.5 A4 4 0 0 1 2.5 10 Z M11.5 7.5 H12.5 A2 2 0 0 1 12.5 11.5 H11.2 M4.5 1.5 C5.5 2.5 4 3.3 5 4.5 M7 1.5 C8 2.5 6.5 3.3 7.5 4.5 M9.5 1.5 C10.5 2.5 9 3.3 10 4.5" fill="none" stroke="currentColor" stroke-width="1.1" stroke-linecap="round" stroke-linejoin="round" /></svg>
<span id="t49" class="t" style="top:1497.50px;font-size:18px;color:#cccccc;line-height:30px;height:30px;left:243.50px;transform:scaleX(0.9040);transform-origin:0 50%;">Java: Ready</span>
<span id="t50" class="t" style="top:1497.50px;font-size:18px;color:#cccccc;line-height:30px;height:30px;left:1875.00px;letter-spacing:-0.128px;">行 7，列 34 (已选择20)</span>
<span id="t51" class="t" style="top:1497.50px;font-size:18px;color:#cccccc;line-height:30px;height:30px;left:2081.00px;letter-spacing:-0.203px;">空格: 4</span>
<span id="t52" class="t" style="top:1497.50px;font-size:18px;color:#cccccc;line-height:30px;height:30px;left:2160.50px;transform:scaleX(0.9118);transform-origin:0 50%;">UTF-8</span>
<span id="t53" class="t" style="top:1497.50px;font-size:18px;color:#cccccc;line-height:30px;height:30px;left:2231.30px;transform:scaleX(0.8362);transform-origin:0 50%;">CRLF</span>
<span id="t54" class="t" style="top:1497.50px;font-size:18px;color:#cccccc;line-height:30px;height:30px;left:2297.00px;letter-spacing:0.888px;">{ }</span>
<span id="t55" class="t" style="top:1497.50px;font-size:18px;color:#cccccc;line-height:30px;height:30px;left:2328.00px;transform:scaleX(0.8684);transform-origin:0 50%;">Java</span>
<div class="a" style="left:2373px;top:1497px;width:140px;height:29px;background:#33383e;"></div>
<svg class="a" style="left:2383.50px;top:1499.50px;color:#cccccc" width="26" height="26" viewBox="0 0 16 16"><path d="M7.5 13.2 C4.5 13 2.2 12 1.5 10.8 V8.2 L2.6 6.3 M13.4 6.3 L14.5 8 M3 6.5 C2.5 4 3.2 2.6 5 2.5 C7 2.4 7.8 3.2 7.7 4.6 C7.6 6.3 6.5 6.9 5 6.9 C4 6.9 3.3 6.8 3 6.5 Z M13 6.5 C13.5 4 12.8 2.6 11 2.5 C9 2.4 8.2 3.2 8.3 4.6 C8.4 6.3 9.5 6.9 11 6.9 C12 6.9 12.7 6.8 13 6.5 Z M5.7 9 V10.6" fill="none" stroke="currentColor" stroke-width="1.1" stroke-linecap="round" stroke-linejoin="round" /><circle cx="11.6" cy="11.6" r="3.6" fill="none" stroke="currentColor" stroke-width="1.1"/><path d="M10.3 10.3 L12.9 12.9 M12.9 10.3 L10.3 12.9" fill="none" stroke="currentColor" stroke-width="1.2" stroke-linecap="round" stroke-linejoin="round" /></svg>
<span id="t56" class="t" style="top:1497.50px;font-size:18px;color:#cccccc;line-height:30px;height:30px;left:2414.00px;letter-spacing:0.042px;">Signed out</span>
<svg class="a" style="left:2525.00px;top:1500.50px;color:#cccccc" width="24" height="24" viewBox="0 0 16 16"><path d="M8 1.8 A4.3 4.3 0 0 1 12.3 6.1 V9 L13.6 11.6 H2.4 L3.7 9 V6.1 A4.3 4.3 0 0 1 8 1.8 Z M6.4 13 A1.7 1.7 0 0 0 9.6 13" fill="none" stroke="currentColor" stroke-width="1.1" stroke-linecap="round" stroke-linejoin="round" /></svg>
</body></html>
